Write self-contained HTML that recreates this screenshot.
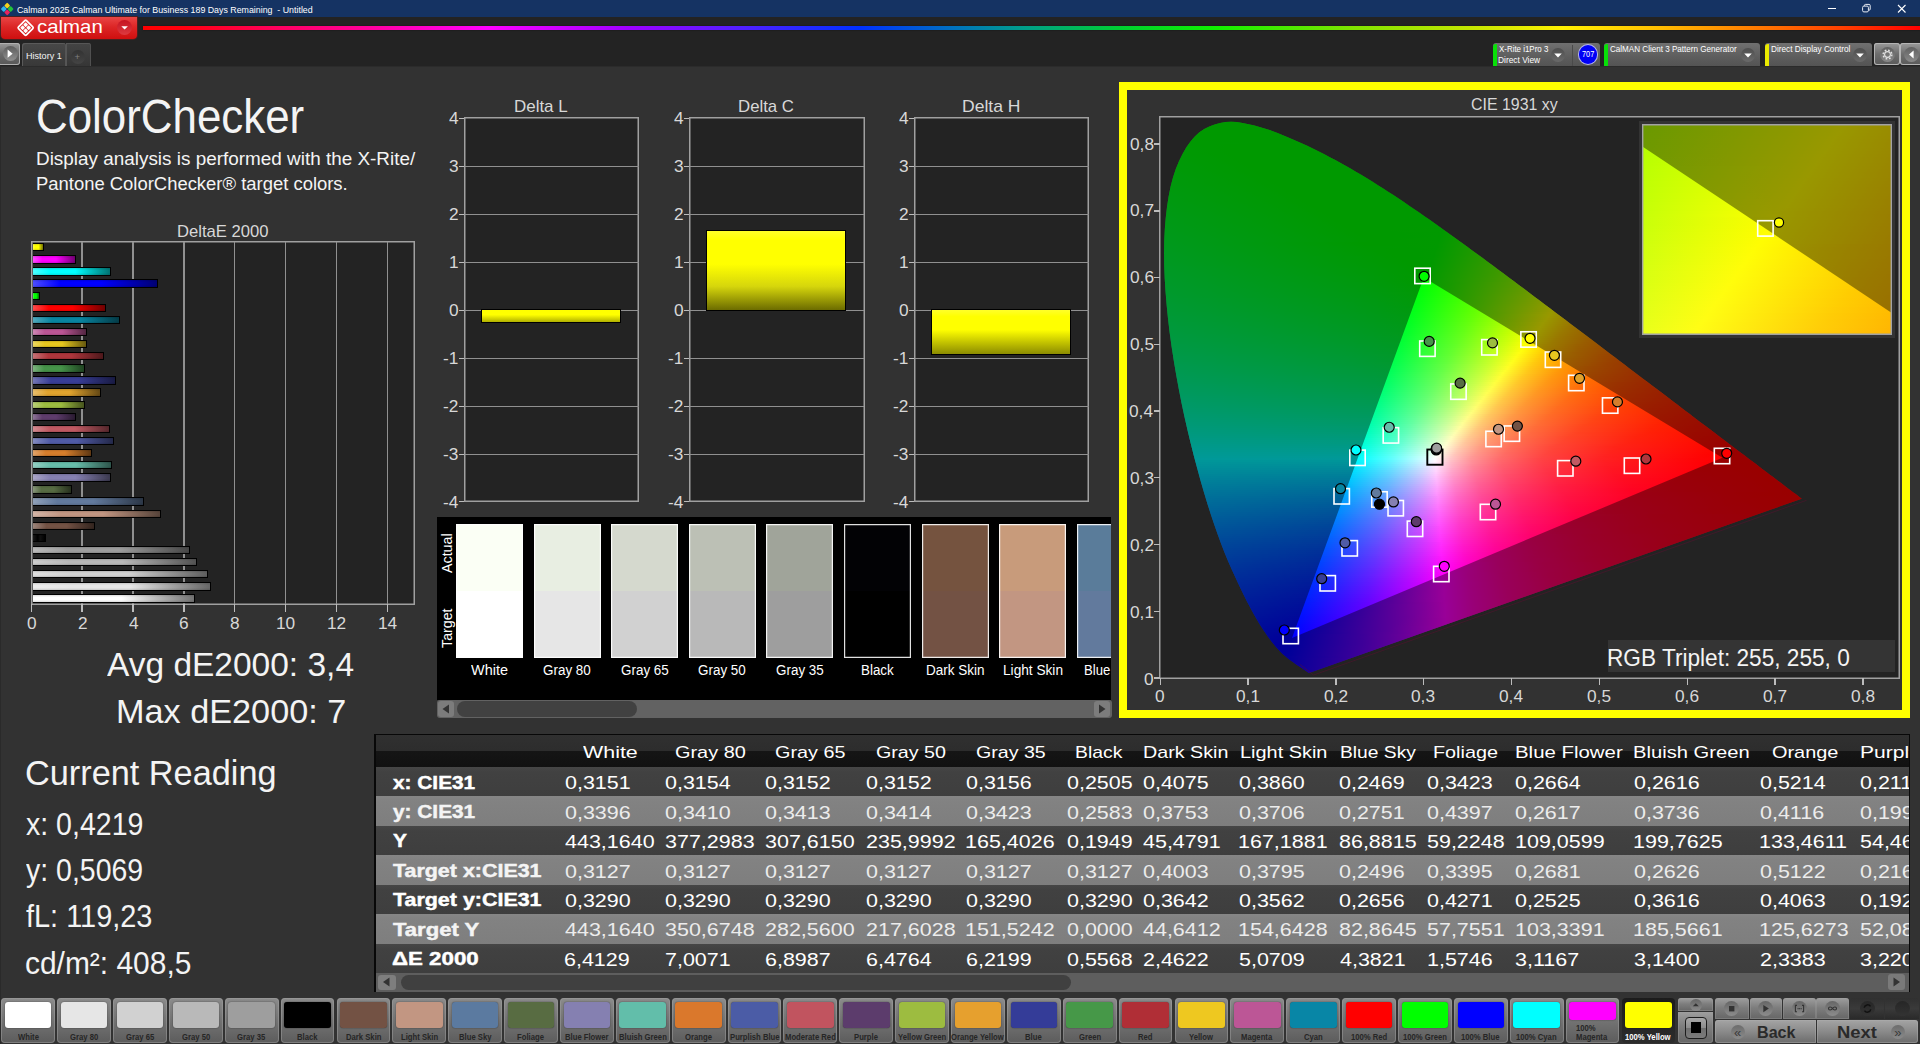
<!DOCTYPE html><html lang="en"><head><meta charset="utf-8"><title>Calman 2025 - ColorChecker</title><style>
html,body{margin:0;padding:0;background:#323232}
body{width:1920px;height:1044px;position:relative;overflow:hidden;font-family:"Liberation Sans",sans-serif}
div,.t,i{position:absolute}
i{display:block}
.t{white-space:nowrap;line-height:1;transform-origin:0 50%}
svg{overflow:visible}
</style></head><body>
<div style="left:0;top:66px;width:1.2px;height:978px;background:#2a2a2a"></div><div style="left:0;top:65.5px;width:1920px;height:1px;background:#2b2b2b"></div>
<!-- top -->
<div style="left:0px;top:0px;width:1920px;height:17px;background:#153363"></div><svg style="position:absolute;left:0;top:1px" width="15" height="15" viewBox="0 0 15 15"><g transform="translate(7.2 8) rotate(45)"><rect x="-4.6" y="-4.6" width="4.4" height="4.4" rx="1" fill="#f2d21c"/><rect x="0.2" y="-4.6" width="4.4" height="4.4" rx="1" fill="#22c33a"/><rect x="-4.6" y="0.2" width="4.4" height="4.4" rx="1" fill="#2fb4ee"/><rect x="0.2" y="0.2" width="4.4" height="4.4" rx="1" fill="#e8245e"/></g></svg><span class="t" style="left:17.16px;top:4.53px;font-size:9.59px;color:#fff;transform:scaleX(0.921);white-space:pre;">Calman 2025 Calman Ultimate for Business 189 Days Remaining  - Untitled</span><svg style="position:absolute;left:1820px;top:0" width="100" height="17" viewBox="0 0 100 17"><path d="M8 8.5h8" stroke="#fff" stroke-width="1" fill="none"/><rect x="42.6" y="6.1" width="5.8" height="5.8" rx="1.3" stroke="#e8ecf4" stroke-width="1" fill="none"/><path d="M44.4 6v-.5q0-1.1 1.1-1.1h3.6q1.1 0 1.1 1.1v3.6q0 1.1 -1.1 1.1h-.6" stroke="#e8ecf4" stroke-width="1" fill="none"/><path d="M78 5l7.5 7.5M85.5 5l-7.5 7.5" stroke="#fff" stroke-width="1.1" fill="none"/></svg><div style="left:0px;top:17px;width:1920px;height:49px;background:#232323"></div><div style="left:1px;top:17px;width:136px;height:22px;background:linear-gradient(#e94545,#dc2626 45%,#cf0f0f);border-radius:0 0 4px 4px;box-shadow:0 0 0 1px #4a2020"></div><svg style="position:absolute;left:16px;top:18px" width="20" height="20" viewBox="0 0 20 20"><g transform="translate(9.65 9.75) rotate(45)"><rect x="-5.65" y="-5.65" width="11.3" height="11.3" rx="1.2" fill="none" stroke="#fff" stroke-width="1.7"/><rect x="-3.9" y="-3.9" width="3.55" height="3.55" rx=".7" fill="#fff"/><rect x="0.35" y="-3.9" width="3.55" height="3.55" rx=".7" fill="#fff"/><rect x="-3.9" y="0.35" width="3.55" height="3.55" rx=".7" fill="#fff"/><rect x="0.35" y="0.35" width="3.55" height="3.55" rx=".7" fill="#fff"/></g></svg><span class="t" style="left:36.74px;top:17.02px;font-size:19px;color:#fff;transform:scaleX(1.074);">calman</span><div style="left:117px;top:20px;width:15px;height:15px;border-radius:50%;background:linear-gradient(#c51421,#dd3a3f)"></div><svg style="position:absolute;left:117px;top:20px" width="15" height="15" viewBox="0 0 15 15"><path d="M4.3 6.2h6.6l-3.3 3.4z" fill="#fff"/></svg><div style="left:143px;top:25.6px;width:1777px;height:4.6px;background:linear-gradient(90deg,#f00 0%,#ff0010 2.4%,#ff0060 7.7%,#ff00a0 12.9%,#f0f 19.4%,#a000ff 27.2%,#5020ff 33.8%,#0030ff 40.3%,#0070c0 45.5%,#00a088 49.7%,#00d030 55.1%,#10f000 60.3%,#80e400 68.1%,#c4e600 74.7%,#fff000 79.9%,#ffc000 85.1%,#ff8000 90.3%,#ff4000 95.6%,#f00 100%);box-shadow:0 0 1.5px rgba(0,0,0,.7)"></div><div style="left:-2px;top:43px;width:22px;height:21.5px;background:linear-gradient(#9a9a9a,#6a6a6a 50%,#585858);border-radius:3px;box-shadow:inset 0 0 0 1px #b0b0b0"></div><div style="left:2.5px;top:46px;width:15px;height:15px;border-radius:50%;background:linear-gradient(#5c5c5c,#909090)"></div><svg style="position:absolute;left:2px;top:46px" width="16" height="16" viewBox="0 0 16 16"><path d="M5.6 3.6l5 4.1-5 4.1z" fill="#fff"/></svg><div style="left:22px;top:43px;width:43.5px;height:23px;background:linear-gradient(#484848,#383838);border-radius:3px 3px 0 0;box-shadow:inset 1px 1px 0 #5a5a5a,inset -1px 0 0 #555"></div><span class="t" style="left:25.96px;top:50.96px;font-size:9.74px;color:#f4f4f4;transform:scaleX(0.931);">History 1</span><div style="left:66px;top:43px;width:25px;height:23px;background:linear-gradient(#444,#363636);border-radius:0 3px 0 0;box-shadow:inset 1px 1px 0 #565656,inset -1px 0 0 #505050"></div><div style="left:70.5px;top:49.5px;width:14px;height:14px;border-radius:50%;background:linear-gradient(#333,#444)"></div><span class="t" style="left:74.53px;top:52.36px;font-size:9.5px;color:#808080;">+</span><div style="left:1492.5px;top:43px;width:107px;height:23px;background:linear-gradient(#707070,#5d5d5d 60%,#545454);border-radius:3px 3px 0 0;"></div><div style="left:1492.7px;top:43.5px;width:4.1px;height:22.5px;background:#08e008;border-radius:3px 0 0 0"></div><span class="t" style="left:1498.83px;top:44.85px;font-size:9.16px;color:#fff;transform:scaleX(0.865);">X-Rite i1Pro 3</span><span class="t" style="left:1498.32px;top:55.85px;font-size:9.16px;color:#fff;transform:scaleX(0.912);">Direct View</span><div style="left:1551px;top:48px;width:14px;height:14px;border-radius:50%;background:linear-gradient(#4e4e4e,#6a6a6a)"></div><svg style="position:absolute;left:1551px;top:48px" width="14" height="14" viewBox="0 0 14 14"><path d="M3.2 5.6h7.6l-3.8 3.9z" fill="#fff"/></svg><div style="left:1572px;top:45px;width:1px;height:21px;background:#4a4a4a"></div><div style="left:1578.6px;top:45.2px;width:18.6px;height:18.6px;border-radius:50%;background:#0000f6;box-shadow:0 0 0 1px #b4b4ec"></div><span class="t" style="left:1581.78px;top:50.91px;font-size:8.14px;color:#fff;transform:scaleX(0.902);">707</span><div style="left:1603.7px;top:43px;width:156.3px;height:23px;background:linear-gradient(#707070,#5d5d5d 60%,#545454);border-radius:3px 3px 0 0;"></div><div style="left:1603.9px;top:43.5px;width:4.1px;height:22.5px;background:#08e008;border-radius:3px 0 0 0"></div><span class="t" style="left:1609.9px;top:44.85px;font-size:9.16px;color:#fff;transform:scaleX(0.882);">CalMAN Client 3 Pattern Generator</span><div style="left:1740.6px;top:48px;width:14px;height:14px;border-radius:50%;background:linear-gradient(#4e4e4e,#6a6a6a)"></div><svg style="position:absolute;left:1740.6px;top:48px" width="14" height="14" viewBox="0 0 14 14"><path d="M3.2 5.6h7.6l-3.8 3.9z" fill="#fff"/></svg><div style="left:1764.6px;top:43px;width:107.2px;height:23px;background:linear-gradient(#707070,#5d5d5d 60%,#545454);border-radius:3px 3px 0 0;"></div><div style="left:1764.8px;top:43.5px;width:4.1px;height:22.5px;background:#eaea00;border-radius:3px 0 0 0"></div><span class="t" style="left:1770.53px;top:44.85px;font-size:9.16px;color:#fff;transform:scaleX(0.897);">Direct Display Control</span><div style="left:1852.7px;top:48px;width:14px;height:14px;border-radius:50%;background:linear-gradient(#4e4e4e,#6a6a6a)"></div><svg style="position:absolute;left:1852.7px;top:48px" width="14" height="14" viewBox="0 0 14 14"><path d="M3.2 5.6h7.6l-3.8 3.9z" fill="#fff"/></svg><div style="left:1874px;top:43px;width:25.5px;height:21.5px;background:linear-gradient(#9a9a9a,#6e6e6e 50%,#5a5a5a);border-radius:3px;box-shadow:inset 0 0 0 1px #b4b4b4"></div><div style="left:1879.5px;top:46.5px;width:15px;height:15px;border-radius:50%;background:linear-gradient(#606060,#8a8a8a)"></div><svg style="position:absolute;left:1879.5px;top:46.5px" width="15" height="15" viewBox="0 0 15 15"><circle cx="7.5" cy="7.5" r="2.9" fill="none" stroke="#e4e4e4" stroke-width="1.1"/><circle cx="7.5" cy="7.5" r="4.4" fill="none" stroke="#e4e4e4" stroke-width="1.4" stroke-dasharray="1.73 1.73"/></svg><div style="left:1899.5px;top:43px;width:24px;height:21.5px;background:linear-gradient(#9a9a9a,#6e6e6e 50%,#5a5a5a);border-radius:3px;box-shadow:inset 0 0 0 1px #b4b4b4"></div><div style="left:1904px;top:46.5px;width:15px;height:15px;border-radius:50%;background:linear-gradient(#606060,#8a8a8a)"></div><svg style="position:absolute;left:1904px;top:46.5px" width="15" height="15" viewBox="0 0 15 15"><path d="M9.6 3.6l-4.6 3.9 4.6 3.9z" fill="#fff"/></svg>
<!-- left -->
<span class="t" style="left:36.21px;top:92.08px;font-size:48.69px;color:#f4f4f4;transform:scaleX(0.901);">ColorChecker</span><span class="t" style="left:36.25px;top:150.13px;font-size:18.75px;color:#f4f4f4;transform:scaleX(1.008);">Display analysis is performed with the X-Rite/</span><span class="t" style="left:36.29px;top:175.13px;font-size:18.75px;color:#f4f4f4;transform:scaleX(0.983);">Pantone ColorChecker® target colors.</span><span class="t" style="left:177.04px;top:223.57px;font-size:16.57px;color:#d8d8d8;transform:scaleX(1.004);">DeltaE 2000</span><div style="left:30.95px;top:241.25px;width:383.6px;height:363.5px;background:#232323;box-shadow:inset 0 0 0 1.5px #a0a0a0"></div><div style="left:81.21px;top:242px;width:1.4px;height:362px;background:#909090"></div><div style="left:81.21px;top:604px;width:1.4px;height:8px;background:#bcbcbc"></div><div style="left:132.17px;top:242px;width:1.4px;height:362px;background:#909090"></div><div style="left:132.17px;top:604px;width:1.4px;height:8px;background:#bcbcbc"></div><div style="left:183.13px;top:242px;width:1.4px;height:362px;background:#909090"></div><div style="left:183.13px;top:604px;width:1.4px;height:8px;background:#bcbcbc"></div><div style="left:234.09px;top:242px;width:1.4px;height:362px;background:#909090"></div><div style="left:234.09px;top:604px;width:1.4px;height:8px;background:#bcbcbc"></div><div style="left:285.05px;top:242px;width:1.4px;height:362px;background:#909090"></div><div style="left:285.05px;top:604px;width:1.4px;height:8px;background:#bcbcbc"></div><div style="left:336.01px;top:242px;width:1.4px;height:362px;background:#909090"></div><div style="left:336.01px;top:604px;width:1.4px;height:8px;background:#bcbcbc"></div><div style="left:386.97px;top:242px;width:1.4px;height:362px;background:#909090"></div><div style="left:386.97px;top:604px;width:1.4px;height:8px;background:#bcbcbc"></div><div style="left:31px;top:604px;width:1.4px;height:8px;background:#bcbcbc"></div><span class="t" style="left:26.64px;top:615.77px;font-size:15.99px;color:#d8d8d8;transform:scaleX(1.080);">0</span><span class="t" style="left:77.61px;top:615.77px;font-size:15.99px;color:#d8d8d8;transform:scaleX(1.080);">2</span><span class="t" style="left:128.63px;top:615.77px;font-size:15.99px;color:#d8d8d8;transform:scaleX(1.080);">4</span><span class="t" style="left:179.47px;top:615.77px;font-size:15.99px;color:#d8d8d8;transform:scaleX(1.080);">6</span><span class="t" style="left:230.49px;top:615.77px;font-size:15.99px;color:#d8d8d8;transform:scaleX(1.080);">8</span><span class="t" style="left:276.32px;top:615.77px;font-size:15.99px;color:#d8d8d8;transform:scaleX(1.080);">10</span><span class="t" style="left:327.38px;top:615.77px;font-size:15.99px;color:#d8d8d8;transform:scaleX(1.080);">12</span><span class="t" style="left:378.16px;top:615.77px;font-size:15.99px;color:#d8d8d8;transform:scaleX(1.080);">14</span><div style="left:32.6px;top:243.15px;width:11.5px;height:8.3px;background:linear-gradient(rgba(0,0,0,.14),rgba(0,0,0,0) 30%,rgba(0,0,0,0) 70%,rgba(0,0,0,.14)),linear-gradient(90deg,#ffff4c,#ffff00 22%,#ffff00 55%,#737300);border:1.4px solid #000;border-left:0;box-sizing:border-box"></div><div style="left:32.6px;top:255.26px;width:43.35px;height:8.3px;background:linear-gradient(rgba(0,0,0,.14),rgba(0,0,0,0) 30%,rgba(0,0,0,0) 70%,rgba(0,0,0,.14)),linear-gradient(90deg,#ff4cff,#ff00ff 22%,#ff00ff 55%,#730073);border:1.4px solid #000;border-left:0;box-sizing:border-box"></div><div style="left:32.6px;top:267.37px;width:78.9px;height:8.3px;background:linear-gradient(rgba(0,0,0,.14),rgba(0,0,0,0) 30%,rgba(0,0,0,0) 70%,rgba(0,0,0,.14)),linear-gradient(90deg,#4cffff,#00ffff 22%,#00ffff 55%,#007373);border:1.4px solid #000;border-left:0;box-sizing:border-box"></div><div style="left:32.6px;top:279.48px;width:125.78px;height:8.3px;background:linear-gradient(rgba(0,0,0,.14),rgba(0,0,0,0) 30%,rgba(0,0,0,0) 70%,rgba(0,0,0,.14)),linear-gradient(90deg,#4c4cff,#0000ff 22%,#0000ff 55%,#000073);border:1.4px solid #000;border-left:0;box-sizing:border-box"></div><div style="left:32.6px;top:291.59px;width:7.55px;height:8.3px;background:linear-gradient(rgba(0,0,0,.14),rgba(0,0,0,0) 30%,rgba(0,0,0,0) 70%,rgba(0,0,0,.14)),linear-gradient(90deg,#4cff4c,#00ff00 22%,#00ff00 55%,#007300);border:1.4px solid #000;border-left:0;box-sizing:border-box"></div><div style="left:32.6px;top:303.7px;width:73.04px;height:8.3px;background:linear-gradient(rgba(0,0,0,.14),rgba(0,0,0,0) 30%,rgba(0,0,0,0) 70%,rgba(0,0,0,.14)),linear-gradient(90deg,#ff4c4c,#ff0000 22%,#ff0000 55%,#730000);border:1.4px solid #000;border-left:0;box-sizing:border-box"></div><div style="left:32.6px;top:315.81px;width:87.05px;height:8.3px;background:linear-gradient(rgba(0,0,0,.14),rgba(0,0,0,0) 30%,rgba(0,0,0,0) 70%,rgba(0,0,0,.14)),linear-gradient(90deg,#52aabd,#0885a1 22%,#0885a1 55%,#043c48);border:1.4px solid #000;border-left:0;box-sizing:border-box"></div><div style="left:32.6px;top:327.92px;width:53.93px;height:8.3px;background:linear-gradient(rgba(0,0,0,.14),rgba(0,0,0,0) 30%,rgba(0,0,0,0) 70%,rgba(0,0,0,.14)),linear-gradient(90deg,#cf89b5,#bb5695 22%,#bb5695 55%,#542743);border:1.4px solid #000;border-left:0;box-sizing:border-box"></div><div style="left:32.6px;top:340.03px;width:53.93px;height:8.3px;background:linear-gradient(rgba(0,0,0,.14),rgba(0,0,0,0) 30%,rgba(0,0,0,0) 70%,rgba(0,0,0,.14)),linear-gradient(90deg,#eed862,#e7c71f 22%,#e7c71f 55%,#685a0e);border:1.4px solid #000;border-left:0;box-sizing:border-box"></div><div style="left:32.6px;top:352.14px;width:71.51px;height:8.3px;background:linear-gradient(rgba(0,0,0,.14),rgba(0,0,0,0) 30%,rgba(0,0,0,0) 70%,rgba(0,0,0,.14)),linear-gradient(90deg,#c77276,#af363c 22%,#af363c 55%,#4f181b);border:1.4px solid #000;border-left:0;box-sizing:border-box"></div><div style="left:32.6px;top:364.25px;width:52.4px;height:8.3px;background:linear-gradient(rgba(0,0,0,.14),rgba(0,0,0,0) 30%,rgba(0,0,0,0) 70%,rgba(0,0,0,.14)),linear-gradient(90deg,#7eb480,#469449 22%,#469449 55%,#1f4321);border:1.4px solid #000;border-left:0;box-sizing:border-box"></div><div style="left:32.6px;top:376.36px;width:83.48px;height:8.3px;background:linear-gradient(rgba(0,0,0,.14),rgba(0,0,0,0) 30%,rgba(0,0,0,0) 70%,rgba(0,0,0,.14)),linear-gradient(90deg,#7477b6,#383d96 22%,#383d96 55%,#191b44);border:1.4px solid #000;border-left:0;box-sizing:border-box"></div><div style="left:32.6px;top:388.47px;width:67.94px;height:8.3px;background:linear-gradient(rgba(0,0,0,.14),rgba(0,0,0,0) 30%,rgba(0,0,0,0) 70%,rgba(0,0,0,.14)),linear-gradient(90deg,#e9bf6d,#e0a32e 22%,#e0a32e 55%,#654915);border:1.4px solid #000;border-left:0;box-sizing:border-box"></div><div style="left:32.6px;top:400.58px;width:52.4px;height:8.3px;background:linear-gradient(rgba(0,0,0,.14),rgba(0,0,0,0) 30%,rgba(0,0,0,0) 70%,rgba(0,0,0,.14)),linear-gradient(90deg,#bad079,#9dbc40 22%,#9dbc40 55%,#47551d);border:1.4px solid #000;border-left:0;box-sizing:border-box"></div><div style="left:32.6px;top:412.69px;width:43.23px;height:8.3px;background:linear-gradient(rgba(0,0,0,.14),rgba(0,0,0,0) 30%,rgba(0,0,0,0) 70%,rgba(0,0,0,.14)),linear-gradient(90deg,#8e7698,#5e3c6c 22%,#5e3c6c 55%,#2a1b31);border:1.4px solid #000;border-left:0;box-sizing:border-box"></div><div style="left:32.6px;top:424.81px;width:77.37px;height:8.3px;background:linear-gradient(rgba(0,0,0,.14),rgba(0,0,0,0) 30%,rgba(0,0,0,0) 70%,rgba(0,0,0,.14)),linear-gradient(90deg,#d48c92,#c15a63 22%,#c15a63 55%,#57282d);border:1.4px solid #000;border-left:0;box-sizing:border-box"></div><div style="left:32.6px;top:436.92px;width:81.45px;height:8.3px;background:linear-gradient(rgba(0,0,0,.14),rgba(0,0,0,0) 30%,rgba(0,0,0,0) 70%,rgba(0,0,0,.14)),linear-gradient(90deg,#848cc1,#505ba6 22%,#505ba6 55%,#24294b);border:1.4px solid #000;border-left:0;box-sizing:border-box"></div><div style="left:32.6px;top:449.03px;width:58.98px;height:8.3px;background:linear-gradient(rgba(0,0,0,.14),rgba(0,0,0,0) 30%,rgba(0,0,0,0) 70%,rgba(0,0,0,.14)),linear-gradient(90deg,#e2a56b,#d67e2c 22%,#d67e2c 55%,#603914);border:1.4px solid #000;border-left:0;box-sizing:border-box"></div><div style="left:32.6px;top:461.14px;width:79.41px;height:8.3px;background:linear-gradient(rgba(0,0,0,.14),rgba(0,0,0,0) 30%,rgba(0,0,0,0) 70%,rgba(0,0,0,.14)),linear-gradient(90deg,#95d1c4,#67bdaa 22%,#67bdaa 55%,#2e554c);border:1.4px solid #000;border-left:0;box-sizing:border-box"></div><div style="left:32.6px;top:473.25px;width:78.81px;height:8.3px;background:linear-gradient(rgba(0,0,0,.14),rgba(0,0,0,0) 30%,rgba(0,0,0,0) 70%,rgba(0,0,0,.14)),linear-gradient(90deg,#aaa6c8,#8580b1 22%,#8580b1 55%,#3c3a50);border:1.4px solid #000;border-left:0;box-sizing:border-box"></div><div style="left:32.6px;top:485.36px;width:39.52px;height:8.3px;background:linear-gradient(rgba(0,0,0,.14),rgba(0,0,0,0) 30%,rgba(0,0,0,0) 70%,rgba(0,0,0,.14)),linear-gradient(90deg,#89987b,#576c43 22%,#576c43 55%,#27311e);border:1.4px solid #000;border-left:0;box-sizing:border-box"></div><div style="left:32.6px;top:497.47px;width:111.06px;height:8.3px;background:linear-gradient(rgba(0,0,0,.14),rgba(0,0,0,0) 30%,rgba(0,0,0,0) 70%,rgba(0,0,0,.14)),linear-gradient(90deg,#91a2ba,#627a9d 22%,#627a9d 55%,#2c3747);border:1.4px solid #000;border-left:0;box-sizing:border-box"></div><div style="left:32.6px;top:509.58px;width:128.61px;height:8.3px;background:linear-gradient(rgba(0,0,0,.14),rgba(0,0,0,0) 30%,rgba(0,0,0,0) 70%,rgba(0,0,0,.14)),linear-gradient(90deg,#d4b6a8,#c29682 22%,#c29682 55%,#57443a);border:1.4px solid #000;border-left:0;box-sizing:border-box"></div><div style="left:32.6px;top:521.69px;width:62.14px;height:8.3px;background:linear-gradient(rgba(0,0,0,.14),rgba(0,0,0,0) 30%,rgba(0,0,0,0) 70%,rgba(0,0,0,.14)),linear-gradient(90deg,#9d867c,#735244 22%,#735244 55%,#34251f);border:1.4px solid #000;border-left:0;box-sizing:border-box"></div><div style="left:32.6px;top:533.8px;width:13.59px;height:8.3px;background:linear-gradient(rgba(0,0,0,.14),rgba(0,0,0,0) 30%,rgba(0,0,0,0) 70%,rgba(0,0,0,.14)),linear-gradient(90deg,#1a1a1a,#000 40%,#111 60%,#000);border:1.4px solid #000;border-left:0;box-sizing:border-box"></div><div style="left:32.6px;top:545.91px;width:157.88px;height:8.3px;background:linear-gradient(rgba(0,0,0,.14),rgba(0,0,0,0) 30%,rgba(0,0,0,0) 70%,rgba(0,0,0,.14)),linear-gradient(90deg,#bbbbbb,#9e9e9e 22%,#9e9e9e 55%,#474747);border:1.4px solid #000;border-left:0;box-sizing:border-box"></div><div style="left:32.6px;top:558.02px;width:164.42px;height:8.3px;background:linear-gradient(rgba(0,0,0,.14),rgba(0,0,0,0) 30%,rgba(0,0,0,0) 70%,rgba(0,0,0,.14)),linear-gradient(90deg,#cecece,#b9b9b9 22%,#b9b9b9 55%,#535353);border:1.4px solid #000;border-left:0;box-sizing:border-box"></div><div style="left:32.6px;top:570.13px;width:175.18px;height:8.3px;background:linear-gradient(rgba(0,0,0,.14),rgba(0,0,0,0) 30%,rgba(0,0,0,0) 70%,rgba(0,0,0,.14)),linear-gradient(90deg,#dfdfdf,#d1d1d1 22%,#d1d1d1 55%,#5e5e5e);border:1.4px solid #000;border-left:0;box-sizing:border-box"></div><div style="left:32.6px;top:582.24px;width:177.94px;height:8.3px;background:linear-gradient(rgba(0,0,0,.14),rgba(0,0,0,0) 30%,rgba(0,0,0,0) 70%,rgba(0,0,0,.14)),linear-gradient(90deg,#eeeeee,#e6e6e6 22%,#e6e6e6 55%,#676767);border:1.4px solid #000;border-left:0;box-sizing:border-box"></div><div style="left:32.6px;top:594.35px;width:162.8px;height:8.3px;background:linear-gradient(rgba(0,0,0,.14),rgba(0,0,0,0) 30%,rgba(0,0,0,0) 70%,rgba(0,0,0,.14)),linear-gradient(90deg,#ffffff,#ffffff 22%,#ffffff 55%,#737373);border:1.4px solid #000;border-left:0;box-sizing:border-box"></div><span class="t" style="left:107.23px;top:647.63px;font-size:33.87px;color:#f4f4f4;transform:scaleX(0.989);">Avg dE2000: 3,4</span><span class="t" style="left:115.79px;top:694.63px;font-size:33.87px;color:#f4f4f4;transform:scaleX(1.011);">Max dE2000: 7</span><span class="t" style="left:25.19px;top:755.93px;font-size:35.76px;color:#f4f4f4;transform:scaleX(0.959);">Current Reading</span><span class="t" style="left:25.69px;top:808.66px;font-size:30.52px;color:#f4f4f4;transform:scaleX(0.935);">x: 0,4219</span><span class="t" style="left:25.94px;top:855.36px;font-size:30.52px;color:#f4f4f4;transform:scaleX(0.933);">y: 0,5069</span><span class="t" style="left:25.6px;top:901.46px;font-size:30.52px;color:#f4f4f4;transform:scaleX(0.947);">fL: 119,23</span><span class="t" style="left:24.74px;top:948.16px;font-size:30.52px;color:#f4f4f4;transform:scaleX(0.981);">cd/m²: 408,5</span>
<!-- delta -->
<span class="t" style="left:514.01px;top:99.17px;font-size:16.57px;color:#d8d8d8;transform:scaleX(1.022);">Delta L</span><div style="left:464.15px;top:117.4px;width:175.2px;height:384.8px;background:#232323;box-shadow:inset 0 0 0 1.5px #a0a0a0"></div><div style="left:458.6px;top:117.55px;width:5.6px;height:1.3px;background:#bcbcbc"></div><span class="t" style="left:448.8px;top:111.27px;font-size:15.99px;color:#d8d8d8;transform:scaleX(1.080);">4</span><div style="left:464.9px;top:165.55px;width:173.7px;height:1.3px;background:#909090"></div><div style="left:458.6px;top:165.55px;width:5.6px;height:1.3px;background:#bcbcbc"></div><span class="t" style="left:449.04px;top:159.27px;font-size:15.99px;color:#d8d8d8;transform:scaleX(1.080);">3</span><div style="left:464.9px;top:213.55px;width:173.7px;height:1.3px;background:#909090"></div><div style="left:458.6px;top:213.55px;width:5.6px;height:1.3px;background:#bcbcbc"></div><span class="t" style="left:449.16px;top:207.27px;font-size:15.99px;color:#d8d8d8;transform:scaleX(1.080);">2</span><div style="left:464.9px;top:261.55px;width:173.7px;height:1.3px;background:#909090"></div><div style="left:458.6px;top:261.55px;width:5.6px;height:1.3px;background:#bcbcbc"></div><span class="t" style="left:449.13px;top:255.27px;font-size:15.99px;color:#d8d8d8;transform:scaleX(1.080);">1</span><div style="left:464.9px;top:309.55px;width:173.7px;height:1.3px;background:#909090"></div><div style="left:458.6px;top:309.55px;width:5.6px;height:1.3px;background:#bcbcbc"></div><span class="t" style="left:448.96px;top:303.27px;font-size:15.99px;color:#d8d8d8;transform:scaleX(1.080);">0</span><div style="left:464.9px;top:357.55px;width:173.7px;height:1.3px;background:#909090"></div><div style="left:458.6px;top:357.55px;width:5.6px;height:1.3px;background:#bcbcbc"></div><span class="t" style="left:443.38px;top:351.27px;font-size:15.99px;color:#d8d8d8;transform:scaleX(1.080);">-1</span><div style="left:464.9px;top:405.55px;width:173.7px;height:1.3px;background:#909090"></div><div style="left:458.6px;top:405.55px;width:5.6px;height:1.3px;background:#bcbcbc"></div><span class="t" style="left:443.41px;top:399.27px;font-size:15.99px;color:#d8d8d8;transform:scaleX(1.080);">-2</span><div style="left:464.9px;top:453.55px;width:173.7px;height:1.3px;background:#909090"></div><div style="left:458.6px;top:453.55px;width:5.6px;height:1.3px;background:#bcbcbc"></div><span class="t" style="left:443.29px;top:447.27px;font-size:15.99px;color:#d8d8d8;transform:scaleX(1.080);">-3</span><div style="left:458.6px;top:500.95px;width:5.6px;height:1.3px;background:#bcbcbc"></div><span class="t" style="left:443.05px;top:495.07px;font-size:15.99px;color:#d8d8d8;transform:scaleX(1.080);">-4</span><div style="left:481.1px;top:309.25px;width:139.6px;height:14.08px;background:linear-gradient(#ff0 0%,#ff0 40%,#b0b000 100%);border:1.5px solid #000;box-sizing:border-box"></div><span class="t" style="left:737.97px;top:99.17px;font-size:16.57px;color:#d8d8d8;transform:scaleX(1.014);">Delta C</span><div style="left:689.15px;top:117.4px;width:175.4px;height:384.8px;background:#232323;box-shadow:inset 0 0 0 1.5px #a0a0a0"></div><div style="left:683.6px;top:117.55px;width:5.6px;height:1.3px;background:#bcbcbc"></div><span class="t" style="left:673.8px;top:111.27px;font-size:15.99px;color:#d8d8d8;transform:scaleX(1.080);">4</span><div style="left:689.9px;top:165.55px;width:173.9px;height:1.3px;background:#909090"></div><div style="left:683.6px;top:165.55px;width:5.6px;height:1.3px;background:#bcbcbc"></div><span class="t" style="left:674.04px;top:159.27px;font-size:15.99px;color:#d8d8d8;transform:scaleX(1.080);">3</span><div style="left:689.9px;top:213.55px;width:173.9px;height:1.3px;background:#909090"></div><div style="left:683.6px;top:213.55px;width:5.6px;height:1.3px;background:#bcbcbc"></div><span class="t" style="left:674.16px;top:207.27px;font-size:15.99px;color:#d8d8d8;transform:scaleX(1.080);">2</span><div style="left:689.9px;top:261.55px;width:173.9px;height:1.3px;background:#909090"></div><div style="left:683.6px;top:261.55px;width:5.6px;height:1.3px;background:#bcbcbc"></div><span class="t" style="left:674.13px;top:255.27px;font-size:15.99px;color:#d8d8d8;transform:scaleX(1.080);">1</span><div style="left:689.9px;top:309.55px;width:173.9px;height:1.3px;background:#909090"></div><div style="left:683.6px;top:309.55px;width:5.6px;height:1.3px;background:#bcbcbc"></div><span class="t" style="left:673.96px;top:303.27px;font-size:15.99px;color:#d8d8d8;transform:scaleX(1.080);">0</span><div style="left:689.9px;top:357.55px;width:173.9px;height:1.3px;background:#909090"></div><div style="left:683.6px;top:357.55px;width:5.6px;height:1.3px;background:#bcbcbc"></div><span class="t" style="left:668.38px;top:351.27px;font-size:15.99px;color:#d8d8d8;transform:scaleX(1.080);">-1</span><div style="left:689.9px;top:405.55px;width:173.9px;height:1.3px;background:#909090"></div><div style="left:683.6px;top:405.55px;width:5.6px;height:1.3px;background:#bcbcbc"></div><span class="t" style="left:668.41px;top:399.27px;font-size:15.99px;color:#d8d8d8;transform:scaleX(1.080);">-2</span><div style="left:689.9px;top:453.55px;width:173.9px;height:1.3px;background:#909090"></div><div style="left:683.6px;top:453.55px;width:5.6px;height:1.3px;background:#bcbcbc"></div><span class="t" style="left:668.29px;top:447.27px;font-size:15.99px;color:#d8d8d8;transform:scaleX(1.080);">-3</span><div style="left:683.6px;top:500.95px;width:5.6px;height:1.3px;background:#bcbcbc"></div><span class="t" style="left:668.05px;top:495.07px;font-size:15.99px;color:#d8d8d8;transform:scaleX(1.080);">-4</span><div style="left:706.1px;top:229.81px;width:139.6px;height:81.04px;background:linear-gradient(#ffff2a 0%,#ff0 12%,#ff0 42%,#d6d60c 70%,#6c6c00 100%);border:1.5px solid #000;box-sizing:border-box"></div><span class="t" style="left:962.01px;top:99.17px;font-size:16.57px;color:#d8d8d8;transform:scaleX(1.060);">Delta H</span><div style="left:914.15px;top:117.4px;width:175.3px;height:384.8px;background:#232323;box-shadow:inset 0 0 0 1.5px #a0a0a0"></div><div style="left:908.6px;top:117.55px;width:5.6px;height:1.3px;background:#bcbcbc"></div><span class="t" style="left:898.8px;top:111.27px;font-size:15.99px;color:#d8d8d8;transform:scaleX(1.080);">4</span><div style="left:914.9px;top:165.55px;width:173.8px;height:1.3px;background:#909090"></div><div style="left:908.6px;top:165.55px;width:5.6px;height:1.3px;background:#bcbcbc"></div><span class="t" style="left:899.04px;top:159.27px;font-size:15.99px;color:#d8d8d8;transform:scaleX(1.080);">3</span><div style="left:914.9px;top:213.55px;width:173.8px;height:1.3px;background:#909090"></div><div style="left:908.6px;top:213.55px;width:5.6px;height:1.3px;background:#bcbcbc"></div><span class="t" style="left:899.16px;top:207.27px;font-size:15.99px;color:#d8d8d8;transform:scaleX(1.080);">2</span><div style="left:914.9px;top:261.55px;width:173.8px;height:1.3px;background:#909090"></div><div style="left:908.6px;top:261.55px;width:5.6px;height:1.3px;background:#bcbcbc"></div><span class="t" style="left:899.13px;top:255.27px;font-size:15.99px;color:#d8d8d8;transform:scaleX(1.080);">1</span><div style="left:914.9px;top:309.55px;width:173.8px;height:1.3px;background:#909090"></div><div style="left:908.6px;top:309.55px;width:5.6px;height:1.3px;background:#bcbcbc"></div><span class="t" style="left:898.96px;top:303.27px;font-size:15.99px;color:#d8d8d8;transform:scaleX(1.080);">0</span><div style="left:914.9px;top:357.55px;width:173.8px;height:1.3px;background:#909090"></div><div style="left:908.6px;top:357.55px;width:5.6px;height:1.3px;background:#bcbcbc"></div><span class="t" style="left:893.38px;top:351.27px;font-size:15.99px;color:#d8d8d8;transform:scaleX(1.080);">-1</span><div style="left:914.9px;top:405.55px;width:173.8px;height:1.3px;background:#909090"></div><div style="left:908.6px;top:405.55px;width:5.6px;height:1.3px;background:#bcbcbc"></div><span class="t" style="left:893.41px;top:399.27px;font-size:15.99px;color:#d8d8d8;transform:scaleX(1.080);">-2</span><div style="left:914.9px;top:453.55px;width:173.8px;height:1.3px;background:#909090"></div><div style="left:908.6px;top:453.55px;width:5.6px;height:1.3px;background:#bcbcbc"></div><span class="t" style="left:893.29px;top:447.27px;font-size:15.99px;color:#d8d8d8;transform:scaleX(1.080);">-3</span><div style="left:908.6px;top:500.95px;width:5.6px;height:1.3px;background:#bcbcbc"></div><span class="t" style="left:893.05px;top:495.07px;font-size:15.99px;color:#d8d8d8;transform:scaleX(1.080);">-4</span><div style="left:931.1px;top:309.25px;width:139.6px;height:45.28px;background:linear-gradient(#ffff2a 0%,#ff0 15%,#ff0 45%,#8c8c00 100%);border:1.5px solid #000;box-sizing:border-box"></div>
<!-- swatches -->
<div style="left:436.8px;top:516.8px;width:674.2px;height:183.2px;background:#000;overflow:hidden"><span class="t" style="left:-9.5px;top:29.01px;font-size:14.39px;color:#fff;width:39.99px;text-align:center;transform-origin:50% 50%;transform:rotate(-90deg) scaleX(0.988)">Actual</span><span class="t" style="left:-9.5px;top:103.91px;font-size:14.39px;color:#fff;width:39.99px;text-align:center;transform-origin:50% 50%;transform:rotate(-90deg) scaleX(0.988)">Target</span><div style="left:19.2px;top:7px;width:67px;height:134px;background:linear-gradient(#fbfff5 50%,#ffffff 50%);box-shadow:inset 0 0 0 1.2px rgba(255,255,255,.88)"></div><span class="t" style="left:34.51px;top:145.72px;font-size:14.39px;color:#fff;transform:scaleX(1.005);">White</span><div style="left:96.82px;top:7px;width:67px;height:134px;background:linear-gradient(#e8eee2 50%,#e6e6e6 50%);box-shadow:inset 0 0 0 1.2px rgba(255,255,255,.88)"></div><span class="t" style="left:106.35px;top:145.72px;font-size:14.39px;color:#fff;transform:scaleX(0.934);">Gray 80</span><div style="left:174.44px;top:7px;width:67px;height:134px;background:linear-gradient(#d5d9ce 50%,#d1d1d1 50%);box-shadow:inset 0 0 0 1.2px rgba(255,255,255,.88)"></div><span class="t" style="left:183.97px;top:145.72px;font-size:14.39px;color:#fff;transform:scaleX(0.934);">Gray 65</span><div style="left:252.06px;top:7px;width:67px;height:134px;background:linear-gradient(#bcc0b5 50%,#b9b9b9 50%);box-shadow:inset 0 0 0 1.2px rgba(255,255,255,.88)"></div><span class="t" style="left:261.59px;top:145.72px;font-size:14.39px;color:#fff;transform:scaleX(0.934);">Gray 50</span><div style="left:329.68px;top:7px;width:67px;height:134px;background:linear-gradient(#a0a49a 50%,#9e9e9e 50%);box-shadow:inset 0 0 0 1.2px rgba(255,255,255,.88)"></div><span class="t" style="left:339.21px;top:145.72px;font-size:14.39px;color:#fff;transform:scaleX(0.934);">Gray 35</span><div style="left:407.3px;top:7px;width:67px;height:134px;background:linear-gradient(#020205 50%,#000000 50%);box-shadow:inset 0 0 0 1.2px rgba(255,255,255,.88)"></div><span class="t" style="left:423.86px;top:145.72px;font-size:14.39px;color:#fff;transform:scaleX(0.931);">Black</span><div style="left:484.92px;top:7px;width:67px;height:134px;background:linear-gradient(#75533f 50%,#735244 50%);box-shadow:inset 0 0 0 1.2px rgba(255,255,255,.88)"></div><span class="t" style="left:489.04px;top:145.72px;font-size:14.39px;color:#fff;transform:scaleX(0.938);">Dark Skin</span><div style="left:562.54px;top:7px;width:67px;height:134px;background:linear-gradient(#c89b7b 50%,#c29682 50%);box-shadow:inset 0 0 0 1.2px rgba(255,255,255,.88)"></div><span class="t" style="left:565.91px;top:145.72px;font-size:14.39px;color:#fff;transform:scaleX(0.950);">Light Skin</span><div style="left:640.16px;top:7px;width:67px;height:134px;background:linear-gradient(#5a7c9a 50%,#627a9d 50%);box-shadow:inset 0 0 0 1.2px rgba(255,255,255,.88)"></div><span class="t" style="left:647.23px;top:145.72px;font-size:14.39px;color:#fff;transform:scaleX(0.912);">Blue Sky</span></div><div style="left:437px;top:699.5px;width:674.5px;height:18.5px;background:#626262;border-radius:3px"></div><div style="left:456.5px;top:701px;width:180.5px;height:15.5px;background:#414141;border-radius:8px"></div><div style="left:438px;top:701px;width:16px;height:15.5px;background:#7c7c7c;border-radius:3px"></div><svg style="position:absolute;left:438px;top:701px" width="16" height="16" viewBox="0 0 16 16"><path d="M11 3.5v9l-6.5-4.5z" fill="#333"/></svg><div style="left:1093.5px;top:701px;width:16px;height:15.5px;background:#7c7c7c;border-radius:3px"></div><svg style="position:absolute;left:1093.5px;top:701px" width="16" height="16" viewBox="0 0 16 16"><path d="M5 3.5v9l6.5-4.5z" fill="#333"/></svg>
<!-- cie -->
<div style="left:1119.2px;top:82px;width:791.1px;height:636.1px;border:8px solid #ff0;box-sizing:border-box"></div><span class="t" style="left:1470.9px;top:96.48px;font-size:17.15px;color:#d8d8d8;transform:scaleX(0.929);">CIE 1931 xy</span><div style="left:1159.45px;top:115.75px;width:740.3px;height:563px;background:#232323;box-shadow:inset 0 0 0 1.5px #a0a0a0"></div><div style="left:1159.5px;top:678px;width:1.4px;height:6.5px;background:#bcbcbc"></div><span class="t" style="left:1154.99px;top:689.17px;font-size:15.99px;color:#d8d8d8;transform:scaleX(1.080);">0</span><div style="left:1153.6px;top:677.3px;width:6px;height:1.4px;background:#bcbcbc"></div><span class="t" style="left:1143.86px;top:672.07px;font-size:15.99px;color:#d8d8d8;transform:scaleX(1.080);">0</span><div style="left:1247.35px;top:678px;width:1.4px;height:6.5px;background:#bcbcbc"></div><span class="t" style="left:1235.73px;top:689.17px;font-size:15.99px;color:#d8d8d8;transform:scaleX(1.080);">0,1</span><div style="left:1153.6px;top:610.56px;width:6px;height:1.4px;background:#bcbcbc"></div><span class="t" style="left:1129.63px;top:605.13px;font-size:15.99px;color:#d8d8d8;transform:scaleX(1.080);">0,1</span><div style="left:1335.2px;top:678px;width:1.4px;height:6.5px;background:#bcbcbc"></div><span class="t" style="left:1323.59px;top:689.17px;font-size:15.99px;color:#d8d8d8;transform:scaleX(1.080);">0,2</span><div style="left:1153.6px;top:543.82px;width:6px;height:1.4px;background:#bcbcbc"></div><span class="t" style="left:1129.66px;top:538.19px;font-size:15.99px;color:#d8d8d8;transform:scaleX(1.080);">0,2</span><div style="left:1423.05px;top:678px;width:1.4px;height:6.5px;background:#bcbcbc"></div><span class="t" style="left:1411.38px;top:689.17px;font-size:15.99px;color:#d8d8d8;transform:scaleX(1.080);">0,3</span><div style="left:1153.6px;top:477.08px;width:6px;height:1.4px;background:#bcbcbc"></div><span class="t" style="left:1129.54px;top:471.25px;font-size:15.99px;color:#d8d8d8;transform:scaleX(1.080);">0,3</span><div style="left:1510.9px;top:678px;width:1.4px;height:6.5px;background:#bcbcbc"></div><span class="t" style="left:1499.11px;top:689.17px;font-size:15.99px;color:#d8d8d8;transform:scaleX(1.080);">0,4</span><div style="left:1153.6px;top:410.34px;width:6px;height:1.4px;background:#bcbcbc"></div><span class="t" style="left:1129.3px;top:404.31px;font-size:15.99px;color:#d8d8d8;transform:scaleX(1.080);">0,4</span><div style="left:1598.75px;top:678px;width:1.4px;height:6.5px;background:#bcbcbc"></div><span class="t" style="left:1587.07px;top:689.17px;font-size:15.99px;color:#d8d8d8;transform:scaleX(1.080);">0,5</span><div style="left:1153.6px;top:343.6px;width:6px;height:1.4px;background:#bcbcbc"></div><span class="t" style="left:1129.51px;top:337.37px;font-size:15.99px;color:#d8d8d8;transform:scaleX(1.080);">0,5</span><div style="left:1686.6px;top:678px;width:1.4px;height:6.5px;background:#bcbcbc"></div><span class="t" style="left:1674.93px;top:689.17px;font-size:15.99px;color:#d8d8d8;transform:scaleX(1.080);">0,6</span><div style="left:1153.6px;top:276.86px;width:6px;height:1.4px;background:#bcbcbc"></div><span class="t" style="left:1129.54px;top:270.43px;font-size:15.99px;color:#d8d8d8;transform:scaleX(1.080);">0,6</span><div style="left:1774.45px;top:678px;width:1.4px;height:6.5px;background:#bcbcbc"></div><span class="t" style="left:1762.84px;top:689.17px;font-size:15.99px;color:#d8d8d8;transform:scaleX(1.080);">0,7</span><div style="left:1153.6px;top:210.12px;width:6px;height:1.4px;background:#bcbcbc"></div><span class="t" style="left:1129.66px;top:203.49px;font-size:15.99px;color:#d8d8d8;transform:scaleX(1.080);">0,7</span><div style="left:1862.3px;top:678px;width:1.4px;height:6.5px;background:#bcbcbc"></div><span class="t" style="left:1850.63px;top:689.17px;font-size:15.99px;color:#d8d8d8;transform:scaleX(1.080);">0,8</span><div style="left:1153.6px;top:143.38px;width:6px;height:1.4px;background:#bcbcbc"></div><span class="t" style="left:1129.54px;top:136.55px;font-size:15.99px;color:#d8d8d8;transform:scaleX(1.080);">0,8</span><div class="cie" style="left:1163px;top:120px;width:640px;height:554px;clip-path:polygon(146px 552.92px,144.15px 551.76px,141.96px 550.23px,139.06px 548.29px,137.21px 547.07px,135.1px 545.69px,132.79px 544.15px,130.2px 542.36px,127.3px 540.25px,124.08px 537.71px,121.8px 535.8px,119.38px 533.66px,116.67px 530.95px,114.88px 529.02px,113px 526.92px,111.01px 524.6px,108.91px 522px,106.7px 519.07px,104.78px 516.41px,102.79px 513.6px,100.73px 510.58px,98.58px 507.31px,96.34px 503.72px,94px 499.77px,91.56px 495.49px,89.04px 490.95px,86.42px 486.1px,83.7px 480.88px,80.88px 475.26px,77.95px 469.18px,74.87px 462.67px,71.64px 455.8px,68.3px 448.52px,64.91px 440.79px,61.5px 432.58px,58.11px 423.84px,54.73px 414.56px,51.3px 404.76px,47.85px 394.47px,44.41px 383.72px,41.01px 372.54px,37.66px 360.95px,34.32px 348.83px,30.95px 336.14px,27.61px 323.01px,24.37px 309.59px,21.29px 296.02px,18.43px 282.44px,15.75px 268.71px,13.17px 254.66px,10.75px 240.47px,8.55px 226.29px,6.61px 212.28px,5px 198.61px,3.67px 185.15px,2.56px 171.75px,1.72px 158.53px,1.2px 145.6px,1.02px 133.05px,1.23px 121.01px,1.81px 109.34px,2.73px 97.95px,4px 86.95px,5.63px 76.46px,7.62px 66.6px,9.99px 57.49px,12.77px 49.04px,15.97px 41.16px,19.53px 33.91px,23.39px 27.34px,27.51px 21.51px,31.81px 16.49px,36.35px 12.34px,41.22px 9.03px,46.34px 6.45px,51.65px 4.5px,57.08px 3.09px,62.55px 2.12px,68.08px 1.73px,73.78px 2.04px,79.61px 2.89px,85.52px 4.13px,91.46px 5.61px,97.36px 7.17px,103.27px 8.9px,109.22px 10.95px,115.19px 13.23px,121.14px 15.67px,127.05px 18.18px,132.86px 20.69px,138.58px 23.21px,144.23px 25.82px,149.83px 28.5px,155.38px 31.24px,160.9px 34.04px,166.38px 36.89px,171.83px 39.79px,177.23px 42.74px,182.6px 45.75px,187.94px 48.82px,193.27px 51.93px,198.6px 55.1px,203.92px 58.31px,209.23px 61.58px,214.53px 64.9px,219.82px 68.27px,225.1px 71.67px,230.38px 75.1px,235.64px 78.57px,240.88px 82.09px,246.12px 85.63px,251.35px 89.22px,256.58px 92.82px,261.81px 96.45px,267.04px 100.1px,272.27px 103.79px,277.49px 107.49px,282.71px 111.22px,287.94px 114.97px,293.17px 118.74px,298.4px 122.52px,303.65px 126.33px,308.89px 130.15px,314.14px 133.99px,319.38px 137.84px,324.61px 141.69px,329.84px 145.55px,335.05px 149.43px,340.27px 153.31px,345.48px 157.21px,350.68px 161.1px,355.88px 164.98px,361.08px 168.87px,366.29px 172.76px,371.48px 176.64px,376.67px 180.53px,381.84px 184.41px,386.98px 188.27px,392.11px 192.13px,397.22px 195.99px,402.32px 199.84px,407.39px 203.68px,412.44px 207.5px,417.46px 211.3px,422.46px 215.08px,427.44px 218.85px,432.4px 222.61px,437.32px 226.34px,442.22px 230.04px,447.07px 233.72px,451.89px 237.37px,456.68px 241px,461.44px 244.61px,466.16px 248.18px,470.83px 251.72px,475.44px 255.21px,480.02px 258.67px,484.56px 262.09px,489.05px 265.48px,493.49px 268.82px,497.86px 272.12px,502.15px 275.37px,506.38px 278.57px,510.55px 281.74px,514.66px 284.87px,518.7px 287.94px,522.64px 290.93px,526.49px 293.85px,530.23px 296.69px,533.87px 299.45px,537.43px 302.14px,540.91px 304.77px,544.31px 307.34px,547.66px 309.87px,550.95px 312.36px,554.17px 314.8px,557.33px 317.19px,560.4px 319.51px,563.39px 321.77px,566.28px 323.95px,569.62px 326.47px,572.84px 328.88px,575.92px 331.19px,578.89px 333.42px,581.74px 335.57px,584.48px 337.64px,587.1px 339.63px,589.6px 341.53px,592px 343.36px,594.3px 345.11px,597.03px 347.19px,599.6px 349.14px,602.02px 350.97px,604.32px 352.72px,607.2px 354.88px,609.84px 356.87px,612.32px 358.73px,614.61px 360.46px,616.73px 362.07px,618.73px 363.6px,621.53px 365.73px,624.09px 367.67px,626.4px 369.43px,628.48px 371.01px,630.35px 372.39px,631.99px 373.61px,634.63px 375.61px,636.65px 377.15px,638.14px 378.28px,638.7px 378.71px)"><i style="left:62px;top:0px;width:14px;height:2px;background:linear-gradient(90deg,#0f0,#0f0)"></i><i style="left:51px;top:2px;width:36px;height:2px;background:linear-gradient(90deg,#0f0,#0f0)"></i><i style="left:45px;top:4px;width:50px;height:2px;background:linear-gradient(90deg,#0f0,#0f0)"></i><i style="left:41px;top:6px;width:62px;height:2px;background:linear-gradient(90deg,#0f0,#0f0)"></i><i style="left:37px;top:8px;width:72px;height:2px;background:linear-gradient(90deg,#0f0,#0f0)"></i><i style="left:34px;top:10px;width:80px;height:2px;background:linear-gradient(90deg,#0f0,#0f0)"></i><i style="left:32px;top:12px;width:88px;height:2px;background:linear-gradient(90deg,#0f0,#0f0)"></i><i style="left:30px;top:14px;width:94px;height:2px;background:linear-gradient(90deg,#0f0,#0f0)"></i><i style="left:28px;top:16px;width:101px;height:2px;background:linear-gradient(90deg,#0f0,#0f0)"></i><i style="left:26px;top:18px;width:108px;height:2px;background:linear-gradient(90deg,#00ff01,#0f0)"></i><i style="left:25px;top:20px;width:113px;height:2px;background:linear-gradient(90deg,#00ff02,#0f0)"></i><i style="left:23px;top:22px;width:120px;height:2px;background:linear-gradient(90deg,#00ff03,#0f0 93.3%,#0f0)"></i><i style="left:22px;top:24px;width:125px;height:2px;background:linear-gradient(90deg,#00ff04,#0f0 45.6%,#0f0)"></i><i style="left:21px;top:26px;width:130px;height:2px;background:linear-gradient(90deg,#00ff05,#0f0 40%,#0f0)"></i><i style="left:19px;top:28px;width:136px;height:2px;background:linear-gradient(90deg,#00ff06,#0f0 37.5%,#0f0)"></i><i style="left:18px;top:30px;width:141px;height:2px;background:linear-gradient(90deg,#00ff07,#0f0 37.6%,#0f0)"></i><i style="left:17px;top:32px;width:146px;height:2px;background:linear-gradient(90deg,#00ff07,#0f0 38.4%,#0f0)"></i><i style="left:16px;top:34px;width:151px;height:2px;background:linear-gradient(90deg,#00ff08,#0f0 39.1%,#0f0)"></i><i style="left:15px;top:36px;width:156px;height:2px;background:linear-gradient(90deg,#00ff09,#0f0 40.4%,#0f0)"></i><i style="left:14px;top:38px;width:161px;height:2px;background:linear-gradient(90deg,#00ff0a,#0f0 41%,#0f0)"></i><i style="left:13px;top:40px;width:165px;height:2px;background:linear-gradient(90deg,#00ff0b,#0f0 42.4%,#0f0)"></i><i style="left:12px;top:42px;width:170px;height:2px;background:linear-gradient(90deg,#00ff0c,#0f0 43.5%,#0f0)"></i><i style="left:12px;top:44px;width:174px;height:2px;background:linear-gradient(90deg,#00ff0d,#0f0 44.3%,#0f0)"></i><i style="left:11px;top:46px;width:178px;height:2px;background:linear-gradient(90deg,#00ff0e,#0f0 45.5%,#0f0)"></i><i style="left:10px;top:48px;width:182px;height:2px;background:linear-gradient(90deg,#00ff0e,#0f0 46.7%,#0f0)"></i><i style="left:9px;top:50px;width:187px;height:2px;background:linear-gradient(90deg,#00ff0f,#0f0 47.6%,#0f0)"></i><i style="left:9px;top:52px;width:190px;height:2px;background:linear-gradient(90deg,#00ff10,#0f0 48.4%,#0f0)"></i><i style="left:8px;top:54px;width:195px;height:2px;background:linear-gradient(90deg,#0f1,#0f0 49.7%,#0f0)"></i><i style="left:7px;top:56px;width:199px;height:2px;background:linear-gradient(90deg,#00ff12,#0f0 50.8%,#0f0)"></i><i style="left:7px;top:58px;width:202px;height:2px;background:linear-gradient(90deg,#00ff13,#0f0 51.5%,#0f0)"></i><i style="left:6px;top:60px;width:206px;height:2px;background:linear-gradient(90deg,#00ff14,#0f0 52.4%,#0f0)"></i><i style="left:6px;top:62px;width:210px;height:2px;background:linear-gradient(90deg,#00ff14,#0f0 52.9%,#0f0)"></i><i style="left:5px;top:64px;width:214px;height:2px;background:linear-gradient(90deg,#00ff15,#0f0 53.7%,#0f0)"></i><i style="left:5px;top:66px;width:217px;height:2px;background:linear-gradient(90deg,#00ff16,#0f0 54.8%,#0f0)"></i><i style="left:4px;top:68px;width:221px;height:2px;background:linear-gradient(90deg,#00ff17,#0f0 55.7%,#0f0)"></i><i style="left:4px;top:70px;width:224px;height:2px;background:linear-gradient(90deg,#00ff18,#0f0 56.2%,#0f0)"></i><i style="left:4px;top:72px;width:227px;height:2px;background:linear-gradient(90deg,#00ff19,#0f0 56.8%,#0f0)"></i><i style="left:3px;top:74px;width:231px;height:2px;background:linear-gradient(90deg,#00ff1a,#0f0 57.6%,#0f0)"></i><i style="left:3px;top:76px;width:234px;height:2px;background:linear-gradient(90deg,#00ff1b,#0f0 58.5%,#0f0)"></i><i style="left:3px;top:78px;width:237px;height:2px;background:linear-gradient(90deg,#00ff1b,#0f0 59.1%,#0f0)"></i><i style="left:2px;top:80px;width:241px;height:2px;background:linear-gradient(90deg,#00ff1c,#0f0 59.8%,#0f0)"></i><i style="left:2px;top:82px;width:244px;height:2px;background:linear-gradient(90deg,#00ff1d,#0f0 60.2%,#0f0)"></i><i style="left:2px;top:84px;width:247px;height:2px;background:linear-gradient(90deg,#00ff1e,#0f0 61.1%,#0f0)"></i><i style="left:1px;top:86px;width:251px;height:2px;background:linear-gradient(90deg,#00ff1f,#0f0 61.8%,#0f0)"></i><i style="left:1px;top:88px;width:254px;height:2px;background:linear-gradient(90deg,#00ff20,#0f0 62.2%,#0f0)"></i><i style="left:1px;top:90px;width:257px;height:2px;background:linear-gradient(90deg,#00ff21,#0f0 62.6%,#0f0)"></i><i style="left:1px;top:92px;width:260px;height:2px;background:linear-gradient(90deg,#0f2,#0f0 63.5%,#0f0)"></i><i style="left:0px;top:94px;width:264px;height:2px;background:linear-gradient(90deg,#00ff23,#0f0 64%,#0f0)"></i><i style="left:0px;top:96px;width:267px;height:2px;background:linear-gradient(90deg,#00ff24,#0f0 64.4%,#0f0)"></i><i style="left:0px;top:98px;width:269px;height:2px;background:linear-gradient(90deg,#00ff25,#0f0 65.1%,#0f0)"></i><i style="left:0px;top:100px;width:272px;height:2px;background:linear-gradient(90deg,#00ff26,#0f0 65.4%,#0f0)"></i><i style="left:0px;top:102px;width:275px;height:2px;background:linear-gradient(90deg,#00ff26,#0f0 66.2%,#0f0)"></i><i style="left:0px;top:104px;width:278px;height:2px;background:linear-gradient(90deg,#00ff27,#0f0 66.5%,#0f0)"></i><i style="left:0px;top:106px;width:281px;height:2px;background:linear-gradient(90deg,#00ff28,#0f0 66.9%,#02ff00)"></i><i style="left:0px;top:108px;width:283px;height:2px;background:linear-gradient(90deg,#00ff29,#0f0 67.5%,#02ff00 98.9%,#05ff00)"></i><i style="left:0px;top:110px;width:286px;height:2px;background:linear-gradient(90deg,#00ff2a,#0f0 68.2%,#03ff00 97.9%,#0aff00)"></i><i style="left:0px;top:112px;width:289px;height:2px;background:linear-gradient(90deg,#00ff2b,#0f0 68.5%,#02ff00 96.5%,#0eff00)"></i><i style="left:0px;top:114px;width:292px;height:2px;background:linear-gradient(90deg,#00ff2c,#0f0 68.8%,#02ff00 95.2%,#13ff00)"></i><i style="left:0px;top:116px;width:295px;height:2px;background:linear-gradient(90deg,#00ff2d,#0f0 69.5%,#02ff00 93.9%,#17ff00)"></i><i style="left:0px;top:118px;width:297px;height:2px;background:linear-gradient(90deg,#00ff2e,#0f0 70%,#03ff00 93.3%,#1bff00)"></i><i style="left:0px;top:120px;width:300px;height:2px;background:linear-gradient(90deg,#00ff2f,#0f0 70.3%,#02ff00 92%,#1fff00)"></i><i style="left:0px;top:122px;width:303px;height:2px;background:linear-gradient(90deg,#00ff30,#0f0 66.7%,#02ff00 90.8%,#24ff00)"></i><i style="left:0px;top:124px;width:306px;height:2px;background:linear-gradient(90deg,#00ff31,#00ff01 66%,#02ff00 89.5%,#29ff00)"></i><i style="left:0px;top:126px;width:308px;height:2px;background:linear-gradient(90deg,#00ff32,#00ff03 65.3%,#02ff00 89%,#2dff00)"></i><i style="left:0px;top:128px;width:311px;height:2px;background:linear-gradient(90deg,#0f3,#00ff04 64.6%,#0f0 77.8%,#02ff00 87.8%,#32ff00)"></i><i style="left:0px;top:130px;width:314px;height:2px;background:linear-gradient(90deg,#00ff34,#00ff05 63.7%,#0f0 74.5%,#02ff00 86.6%,#38ff00)"></i><i style="left:0px;top:132px;width:317px;height:2px;background:linear-gradient(90deg,#00ff35,#00ff06 63.1%,#0f0 73.8%,#02ff00 85.5%,#3dff00)"></i><i style="left:0px;top:134px;width:319px;height:2px;background:linear-gradient(90deg,#00ff36,#00ff07 62.4%,#0f0 74%,#02ff00 85%,#41ff00)"></i><i style="left:0px;top:136px;width:322px;height:2px;background:linear-gradient(90deg,#00ff37,#0f0 73.6%,#02ff00 83.9%,#47ff00)"></i><i style="left:0px;top:138px;width:325px;height:2px;background:linear-gradient(90deg,#00ff38,#00ff09 61.2%,#0f0 74.2%,#02ff00 82.8%,#4cff00)"></i><i style="left:0px;top:140px;width:328px;height:2px;background:linear-gradient(90deg,#00ff39,#00ff0b 60.4%,#0f0 74.4%,#03ff00 82%,#52ff00)"></i><i style="left:0px;top:142px;width:330px;height:2px;background:linear-gradient(90deg,#00ff3a,#00ff0c 60%,#0f0 74.8%,#02ff00 81.2%,#57ff00)"></i><i style="left:0px;top:144px;width:333px;height:2px;background:linear-gradient(90deg,#00ff3b,#00ff0d 59.2%,#0f0 75.1%,#02ff00 80.2%,#5dff00)"></i><i style="left:0px;top:146px;width:336px;height:2px;background:linear-gradient(90deg,#00ff3d,#00ff0e 58.6%,#0f0 75.3%,#03ff00 79.5%,#63ff00)"></i><i style="left:0px;top:148px;width:338px;height:2px;background:linear-gradient(90deg,#00ff3e,#00ff10 58%,#0f0 75.7%,#03ff00 78.7%,#6f0 99.7%,#68ff00)"></i><i style="left:0px;top:150px;width:341px;height:2px;background:linear-gradient(90deg,#00ff3f,#0f1 57.5%,#0f0 76%,#05ff00 78.3%,#68ff00 98.8%,#6eff00)"></i><i style="left:0px;top:152px;width:344px;height:2px;background:linear-gradient(90deg,#00ff40,#00ff12 56.7%,#0f0 76.2%,#5cff00 95.3%,#75ff00)"></i><i style="left:0px;top:154px;width:346px;height:2px;background:linear-gradient(90deg,#00ff41,#00ff13 56.4%,#02ff00 76%,#64ff00 96%,#7aff00)"></i><i style="left:0px;top:156px;width:349px;height:2px;background:linear-gradient(90deg,#00ff42,#00ff15 55.9%,#01ff00 75.1%,#64ff00 94.8%,#81ff00)"></i><i style="left:0px;top:158px;width:352px;height:2px;background:linear-gradient(90deg,#00ff43,#00ff16 55.1%,#02ff00 74.4%,#6f0 94%,#8f0)"></i><i style="left:0px;top:160px;width:354px;height:2px;background:linear-gradient(90deg,#00ff45,#00ff17 54.8%,#02ff02 73.7%,#64ff00 92.9%,#8eff00)"></i><i style="left:0px;top:162px;width:357px;height:2px;background:linear-gradient(90deg,#00ff46,#00ff19 54.1%,#02ff03 72.8%,#34ff00 82.9%,#95ff00)"></i><i style="left:0px;top:164px;width:360px;height:2px;background:linear-gradient(90deg,#00ff47,#00ff1a 53.6%,#01ff05 71.9%,#28ff00 79.7%,#8dff00 97.5%,#9dff00)"></i><i style="left:0px;top:166px;width:362px;height:2px;background:linear-gradient(90deg,#00ff48,#00ff1b 53.3%,#02ff06 71.5%,#2bff00 79.6%,#8fff00 97%,#a3ff00)"></i><i style="left:0px;top:168px;width:365px;height:2px;background:linear-gradient(90deg,#00ff49,#00ff1d 52.6%,#02ff08 70.7%,#2fff00 79.5%,#93ff00 96.4%,#abff00)"></i><i style="left:0px;top:170px;width:368px;height:2px;background:linear-gradient(90deg,#00ff4b,#00ff1e 52.2%,#02ff09 69.8%,#3f0 79.3%,#9f0 96.2%,#b3ff00)"></i><i style="left:0px;top:172px;width:370px;height:2px;background:linear-gradient(90deg,#00ff4c,#00ff20 51.6%,#03ff0b 69.5%,#39ff00 79.7%,#9fff00 96.2%,#baff00)"></i><i style="left:0px;top:174px;width:373px;height:2px;background:linear-gradient(90deg,#00ff4d,#00ff21 51.2%,#02ff0c 68.6%,#3fff00 79.9%,#a6ff00 96%,#c3ff00)"></i><i style="left:0px;top:176px;width:376px;height:2px;background:linear-gradient(90deg,#00ff4e,#0f2 50.8%,#02ff0e 67.8%,#46ff00 80.1%,#acff00 95.7%,#cbff00)"></i><i style="left:1px;top:178px;width:377px;height:2px;background:linear-gradient(90deg,#00ff50,#00ff24 50.4%,#02ff10 67.1%,#4cff00 80.4%,#b2ff00 95.8%,#d2ff00)"></i><i style="left:1px;top:180px;width:380px;height:2px;background:linear-gradient(90deg,#00ff51,#00ff25 50%,#03ff11 66.6%,#52ff00 80.5%,#b9ff00 95.5%,#dcff00)"></i><i style="left:1px;top:182px;width:383px;height:2px;background:linear-gradient(90deg,#00ff52,#00ff27 49.3%,#02ff13 65.8%,#59ff00 80.7%,#c0ff00 95.3%,#e5ff00)"></i><i style="left:1px;top:184px;width:385px;height:2px;background:linear-gradient(90deg,#00ff54,#00ff28 49.1%,#02ff14 65.2%,#60ff00 81%,#c7ff00 95.3%,#edff00)"></i><i style="left:1px;top:186px;width:388px;height:2px;background:linear-gradient(90deg,#0f5,#00ff2a 48.5%,#01ff16 64.4%,#64ff00 80.7%,#cf0 94.8%,#f7ff00)"></i><i style="left:1px;top:188px;width:391px;height:2px;background:linear-gradient(90deg,#00ff56,#00ff2b 48.1%,#02ff18 63.9%,#6f0 80.1%,#cdff00 93.9%,#fffc00)"></i><i style="left:2px;top:190px;width:392px;height:2px;background:linear-gradient(90deg,#00ff57,#00ff2c 48%,#02ff19 63.3%,#64ff02 79.1%,#cf0 92.9%,#fffd00 99%,#fff500)"></i><i style="left:2px;top:192px;width:395px;height:2px;background:linear-gradient(90deg,#00ff59,#00ff2e 47.3%,#02ff1b 62.5%,#64ff04 78.2%,#9aff00 85.6%,#fffe00 97.7%,#ffeb00)"></i><i style="left:2px;top:194px;width:398px;height:2px;background:linear-gradient(90deg,#00ff5a,#00ff30 47%,#01ff1d 61.8%,#65ff05 77.4%,#8fff00 83.2%,#f8ff00 95.7%,#fffd00 96.7%,#ffe200)"></i><i style="left:2px;top:196px;width:400px;height:2px;background:linear-gradient(90deg,#00ff5c,#00ff31 46.8%,#02ff1e 61.5%,#65ff07 76.8%,#95ff00 83.2%,#fffe00 95.8%,#ffdb00)"></i><i style="left:2px;top:198px;width:403px;height:2px;background:linear-gradient(90deg,#00ff5d,#0f3 46.2%,#02ff20 60.8%,#65ff09 75.9%,#9cff00 83.1%,#fffc00 94.8%,#ffd200)"></i><i style="left:3px;top:200px;width:405px;height:2px;background:linear-gradient(90deg,#00ff5e,#00ff34 45.9%,#02ff22 60%,#65ff0b 75.1%,#a4ff00 83.2%,#fffd00 93.6%,#ffca00)"></i><i style="left:3px;top:202px;width:407px;height:2px;background:linear-gradient(90deg,#00ff60,#00ff36 45.5%,#01ff24 59.5%,#64ff0e 74.2%,#adff00 83.5%,#fffe00 92.6%,#ffc900 99.3%,#ffc400)"></i><i style="left:3px;top:204px;width:410px;height:2px;background:linear-gradient(90deg,#00ff61,#00ff38 45.1%,#02ff26 59%,#66ff0f 73.7%,#b6ff00 83.7%,#fffd00 91.7%,#ffc800 98.3%,#ffbc00)"></i><i style="left:3px;top:206px;width:413px;height:2px;background:linear-gradient(90deg,#00ff63,#00ff39 44.8%,#02ff28 58.4%,#64ff12 72.6%,#c0ff00 83.8%,#fffe00 90.6%,#ffc800 97.1%,#ffb500)"></i><i style="left:4px;top:208px;width:414px;height:2px;background:linear-gradient(90deg,#00ff64,#00ff3b 44.4%,#02ff2a 57.7%,#64ff14 72%,#caff00 84.1%,#fffd00 89.9%,#ffc700 96.4%,#ffb000)"></i><i style="left:4px;top:210px;width:417px;height:2px;background:linear-gradient(90deg,#0f6,#00ff3c 44.1%,#01ff2c 57.1%,#64ff16 71.2%,#cdff00 83.5%,#fffd00 88.7%,#ffc900 95%,#ffa900)"></i><i style="left:4px;top:212px;width:420px;height:2px;background:linear-gradient(90deg,#00ff67,#00ff3e 43.8%,#02ff2d 56.7%,#65ff18 70.5%,#ccff01 82.4%,#fffe00 87.6%,#ffc900 93.8%,#ffa300)"></i><i style="left:4px;top:214px;width:422px;height:2px;background:linear-gradient(90deg,#00ff69,#00ff40 43.6%,#02ff2f 56.2%,#65ff1a 69.9%,#cdff03 81.8%,#fffd00 87%,#ffc800 93.1%,#ff9e00)"></i><i style="left:5px;top:216px;width:424px;height:2px;background:linear-gradient(90deg,#00ff6a,#00ff42 43.2%,#02ff32 55.4%,#65ff1c 69.1%,#ceff06 80.9%,#feff00 85.6%,#ffc300 92.7%,#ff9800)"></i><i style="left:5px;top:218px;width:426px;height:2px;background:linear-gradient(90deg,#00ff6c,#00ff43 43%,#01ff34 54.9%,#63ff1f 68.3%,#caff09 79.8%,#fffd00 85.2%,#ffc700 91.3%,#ff9600 99.5%,#ff9300)"></i><i style="left:5px;top:220px;width:429px;height:2px;background:linear-gradient(90deg,#00ff6d,#00ff45 42.7%,#02ff35 54.5%,#66ff21 67.8%,#cdff0b 79.3%,#fffe00 84.1%,#ffc700 90.2%,#ff9700 98.1%,#ff8e00)"></i><i style="left:5px;top:222px;width:432px;height:2px;background:linear-gradient(90deg,#00ff6f,#00ff47 42.1%,#02ff38 53.9%,#64ff23 66.9%,#ccff0e 78.2%,#ffff03 83.1%,#ffc900 88.9%,#ff9800 96.8%,#ff8900)"></i><i style="left:6px;top:224px;width:433px;height:2px;background:linear-gradient(90deg,#00ff71,#00ff49 42%,#01ff3a 53.3%,#64ff26 66.3%,#cbff10 77.4%,#fffd05 82.4%,#ffd300 86.8%,#ffa100 94.2%,#ff8400)"></i><i style="left:6px;top:226px;width:436px;height:2px;background:linear-gradient(90deg,#00ff72,#00ff4b 41.7%,#01ff3c 52.8%,#64ff28 65.6%,#ccff13 76.6%,#fffe08 81.4%,#ffd000 86.2%,#ff9e00 93.6%,#ff7f00)"></i><i style="left:6px;top:228px;width:439px;height:2px;background:linear-gradient(90deg,#00ff74,#00ff4d 41.5%,#02ff3e 52.4%,#65ff2a 64.9%,#cdff15 75.9%,#fffd0a 80.6%,#ffc700 86.3%,#ff9700 93.8%,#ff7b00)"></i><i style="left:7px;top:230px;width:440px;height:2px;background:linear-gradient(90deg,#00ff75,#00ff4e 41.1%,#02ff40 51.8%,#65ff2d 64.3%,#ccff18 75%,#fffe0d 79.8%,#ffc700 85.5%,#ff9700 93%,#f70)"></i><i style="left:7px;top:232px;width:443px;height:2px;background:linear-gradient(90deg,#0f7,#00ff50 40.9%,#01ff43 51.2%,#63ff2f 63.4%,#caff1b 74%,#ff1 78.8%,#ffca03 84.2%,#f90 91.4%,#ff7200)"></i><i style="left:7px;top:234px;width:446px;height:2px;background:linear-gradient(90deg,#00ff79,#00ff52 40.6%,#03ff45 50.9%,#65ff31 63%,#ceff1d 73.5%,#fffd13 78%,#ffc805 83.4%,#ffa700 88.1%,#ff7900 97.1%,#ff6e00)"></i><i style="left:8px;top:236px;width:447px;height:2px;background:linear-gradient(90deg,#00ff7b,#00ff54 40.5%,#02ff47 50.3%,#66ff34 62.4%,#cdff20 72.7%,#fffe16 77.2%,#ffc907 82.6%,#ffa400 87.7%,#ff7600 96.9%,#ff6b00)"></i><i style="left:8px;top:238px;width:450px;height:2px;background:linear-gradient(90deg,#00ff7c,#00ff56 40.2%,#02ff49 49.8%,#64ff37 61.6%,#cbff23 71.8%,#fffd19 76.4%,#ffc709 81.8%,#ff9d00 87.8%,#ff7100 97.1%,#f60)"></i><i style="left:8px;top:240px;width:452px;height:2px;background:linear-gradient(90deg,#00ff7e,#00ff58 40%,#01ff4c 49.3%,#64ff39 61.1%,#ccff26 71.2%,#fffe1c 75.7%,#ffc80c 81%,#ff9800 87.8%,#ff6c00 97.6%,#ff6300)"></i><i style="left:9px;top:242px;width:454px;height:2px;background:linear-gradient(90deg,#00ff80,#00ff5a 39.6%,#03ff4e 48.9%,#64ff3c 60.4%,#cbff29 70.3%,#ffff1f 74.7%,#ffca0f 79.7%,#f90 86.6%,#ff6d00 96%,#ff5f00)"></i><i style="left:9px;top:244px;width:457px;height:2px;background:linear-gradient(90deg,#00ff82,#00ff5c 39.4%,#02ff51 48.4%,#65ff3f 59.7%,#ccff2c 69.6%,#fffd22 74%,#ffc911 79%,#ff9802 85.8%,#ff6c00 95.2%,#ff5c00)"></i><i style="left:9px;top:246px;width:459px;height:2px;background:linear-gradient(90deg,#00ff84,#00ff5f 39.2%,#02ff53 47.9%,#65ff41 59.3%,#cdff2f 69.1%,#fffe25 73.2%,#ffc914 78.2%,#ff9804 85%,#ff7b00 90.6%,#ff5900)"></i><i style="left:10px;top:248px;width:461px;height:2px;background:linear-gradient(90deg,#00ff85,#00ff61 39%,#01ff56 47.3%,#63ff44 58.4%,#c9ff32 67.9%,#fffd28 72.5%,#ffc816 77.4%,#ff9706 84.2%,#ff7b00 89.6%,#f50)"></i><i style="left:10px;top:250px;width:464px;height:2px;background:linear-gradient(90deg,#00ff87,#00ff63 38.8%,#02ff58 47%,#65ff47 58%,#cdff35 67.5%,#fffe2c 71.6%,#ffc819 76.5%,#ff9708 83.2%,#ff7800 89.2%,#ff5200)"></i><i style="left:10px;top:252px;width:466px;height:2px;background:linear-gradient(90deg,#00ff89,#00ff65 38.6%,#02ff5b 46.6%,#66ff4a 57.5%,#ceff38 67%,#ffff2f 70.8%,#ffc91c 75.8%,#ff980b 82.2%,#ff7300 89.5%,#ff4f00)"></i><i style="left:11px;top:254px;width:468px;height:2px;background:linear-gradient(90deg,#00ff8b,#00ff67 38.5%,#02ff5d 45.9%,#64ff4d 56.6%,#caff3c 65.8%,#fffd32 70.1%,#ffc71e 75%,#ff970c 81.4%,#ff6f00 89.3%,#ff4c00)"></i><i style="left:11px;top:256px;width:471px;height:2px;background:linear-gradient(90deg,#00ff8d,#00ff6a 38.2%,#01ff60 45.4%,#64ff50 56.1%,#cbff3f 65.2%,#fffe36 69.2%,#ffc922 73.9%,#ff980f 80.3%,#ff6c00 89%,#ff4800)"></i><i style="left:11px;top:258px;width:473px;height:2px;background:linear-gradient(90deg,#00ff8f,#00ff6c 38.1%,#02ff63 45.2%,#64ff53 55.6%,#ccff42 64.7%,#fffd38 68.7%,#ffc824 73.4%,#ff9711 79.7%,#ff6b00 88.4%,#ff4600)"></i><i style="left:12px;top:260px;width:475px;height:2px;background:linear-gradient(90deg,#00ff91,#00ff6e 37.9%,#02ff65 44.6%,#65ff56 54.9%,#cbff45 63.8%,#fffe3c 67.8%,#ffc827 72.4%,#ff9814 78.5%,#ff6c02 86.9%,#ff4500 99.2%,#ff4300)"></i><i style="left:12px;top:262px;width:478px;height:2px;background:linear-gradient(90deg,#00ff93,#00ff71 37.7%,#01ff68 44.1%,#65ff59 54.4%,#ccff48 63.2%,#ffff40 66.9%,#ffc92a 71.5%,#ff9816 77.6%,#ff6c04 86%,#ff5400 92.5%,#ff4000)"></i><i style="left:12px;top:264px;width:480px;height:2px;background:linear-gradient(90deg,#00ff96,#00ff73 37.7%,#01ff6b 43.8%,#63ff5c 53.8%,#cbff4c 62.5%,#fffd43 66.5%,#ffc72d 71%,#ff9718 77.1%,#ff6b06 85.4%,#ff5400 91.7%,#ff3d00)"></i><i style="left:13px;top:266px;width:482px;height:2px;background:linear-gradient(90deg,#00ff98,#00ff75 37.6%,#02ff6e 43.4%,#65ff5f 53.3%,#ccff4f 61.8%,#fffe47 65.6%,#ffca31 69.9%,#ff9a1c 75.7%,#ff6d09 83.8%,#ff5200 91.1%,#ff3b00)"></i><i style="left:13px;top:268px;width:485px;height:2px;background:linear-gradient(90deg,#00ff9a,#00ff78 37.3%,#02ff71 42.9%,#63ff62 52.6%,#caff53 61%,#fffd4a 64.9%,#ffc833 69.3%,#ff981e 75.1%,#ff6c0a 83.1%,#ff4f00 91.1%,#ff3800)"></i><i style="left:13px;top:270px;width:487px;height:2px;background:linear-gradient(90deg,#00ff9c,#00ff7a 37.4%,#01ff74 42.5%,#64ff66 52.2%,#ccff57 60.6%,#fffe4f 64.3%,#ffc936 68.6%,#ff9820 74.3%,#ff6c0c 82.3%,#ff4c00 91.2%,#ff3600)"></i><i style="left:14px;top:272px;width:489px;height:2px;background:linear-gradient(90deg,#00ff9e,#00ff7d 37.2%,#01ff77 41.9%,#64ff69 51.5%,#caff5a 59.7%,#ffff53 63.4%,#ffc93a 67.7%,#ff9823 73.4%,#ff6d0f 81.2%,#ff4900 91.2%,#f30)"></i><i style="left:14px;top:274px;width:491px;height:2px;background:linear-gradient(90deg,#00ffa0,#00ff80 37.1%,#02ff7a 41.8%,#64ff6c 51.1%,#cbff5e 59.3%,#fffd56 62.9%,#ffc83c 67.2%,#ff9725 72.9%,#ff6a10 80.9%,#ff4500 91.4%,#ff3100)"></i><i style="left:15px;top:276px;width:493px;height:2px;background:linear-gradient(90deg,#00ffa3,#00ff82 36.9%,#02ff7d 41.2%,#64ff70 50.5%,#cdff62 58.6%,#fffe5b 62.1%,#ffc840 66.3%,#ff9728 72%,#ff6b12 79.7%,#f40 90.9%,#ff2f00)"></i><i style="left:15px;top:278px;width:496px;height:2px;background:linear-gradient(90deg,#00ffa5,#00ff85 36.9%,#01ff80 40.7%,#65ff73 50%,#cbff66 57.9%,#fffd5e 61.5%,#ffc642 65.7%,#ff952a 71.4%,#ff6a14 79%,#ff4300 90.1%,#ff2c00)"></i><i style="left:15px;top:280px;width:498px;height:2px;background:linear-gradient(90deg,#00ffa7,#0f8 36.9%,#03ff83 40.6%,#65ff77 49.6%,#ccff69 57.4%,#fffe62 60.8%,#ffc947 64.9%,#ff982e 70.3%,#ff6c17 77.7%,#ff4503 88.4%,#ff2a00)"></i><i style="left:16px;top:282px;width:500px;height:2px;background:linear-gradient(90deg,#0fa,#00ff8a 36.8%,#02ff87 40%,#65ff7a 49%,#ceff6d 56.8%,#ffff67 60%,#ffca4b 64%,#ff9831 69.4%,#ff6c19 76.8%,#ff4504 87.4%,#f30 94.6%,#ff2800)"></i><i style="left:16px;top:284px;width:503px;height:2px;background:linear-gradient(90deg,#00ffac,#00ff8d 36.8%,#02ff8a 39.6%,#63ff7e 48.3%,#c9ff72 55.9%,#fffd6a 59.4%,#ffc84d 63.4%,#ff9733 68.8%,#ff6b1b 76.1%,#ff4406 86.7%,#ff3200 93.6%,#ff2600)"></i><i style="left:17px;top:286px;width:504px;height:2px;background:linear-gradient(90deg,#00ffae,#00ff90 36.9%,#01ff8d 39.1%,#63ff82 47.8%,#caff76 55.4%,#ffff6f 58.7%,#ffc851 62.7%,#ff9837 67.9%,#ff6c1e 75%,#ff4508 85.3%,#ff3100 93.3%,#ff2400)"></i><i style="left:17px;top:288px;width:507px;height:2px;background:linear-gradient(90deg,#00ffb1,#00ff93 36.9%,#03ff91 38.9%,#66ff85 47.5%,#cfff79 55%,#fffd73 58.2%,#ffc754 62.1%,#ff9739 67.3%,#ff6b20 74.4%,#ff440a 84.6%,#ff2e00 93.3%,#f20)"></i><i style="left:18px;top:290px;width:509px;height:2px;background:linear-gradient(90deg,#00ffb3,#00ff96 36.7%,#02ff94 38.3%,#64ff8a 46.8%,#caff7e 54%,#fffe78 57.4%,#ffca59 61.1%,#ff983d 66.2%,#ff6c23 73.3%,#ff450c 83.3%,#ff2c00 93.1%,#ff2000)"></i><i style="left:18px;top:292px;width:511px;height:2px;background:linear-gradient(90deg,#00ffb6,#0f9 37%,#04ff98 38.2%,#67ff8d 46.6%,#cfff82 53.8%,#ffff7d 56.8%,#ffc85c 60.7%,#ff973f 65.8%,#ff6b24 72.8%,#ff440d 82.8%,#ff2a00 93.3%,#ff1e00)"></i><i style="left:18px;top:294px;width:514px;height:2px;background:linear-gradient(90deg,#00ffb9,#00ff9c 37%,#05ff9b 37.9%,#67ff91 46.1%,#d0ff86 53.3%,#fffd81 56.2%,#ffc860 59.9%,#ff9843 64.8%,#ff6c28 71.6%,#ff4510 81.3%,#ff2700 93.4%,#ff1c00)"></i><i style="left:19px;top:296px;width:515px;height:2px;background:linear-gradient(90deg,#0fb,#00ff9f 37.1%,#62ff96 45.2%,#c8ff8c 52.2%,#ffff86 55.5%,#ffc964 59.2%,#ff9846 64.1%,#ff6c2a 70.9%,#ff4412 80.6%,#ff2500 93.4%,#ff1a00)"></i><i style="left:19px;top:298px;width:518px;height:2px;background:linear-gradient(90deg,#00ffbe,#02ffa3 36.9%,#65ff9a 45%,#cdff90 51.9%,#fffd8a 55%,#ffc767 58.7%,#ff9748 63.5%,#ff6b2c 70.3%,#ff4313 79.9%,#ff2300 93.4%,#ff1800)"></i><i style="left:20px;top:300px;width:520px;height:2px;background:linear-gradient(90deg,#00ffc1,#02ffa7 36.3%,#63ff9e 44.2%,#cbff95 51.2%,#fffe8f 54.2%,#ffca6d 57.7%,#ff984d 62.5%,#ff6c30 69%,#ff4516 78.5%,#f20 92.5%,#ff1600)"></i><i style="left:20px;top:302px;width:522px;height:2px;background:linear-gradient(90deg,#00ffc4,#01ffab 36%,#63ffa2 43.9%,#c9ff9a 50.6%,#ffff95 53.6%,#ffc870 57.3%,#ff974f 62.1%,#ff6b32 68.6%,#ff4417 78%,#ff2100 92.1%,#ff1500)"></i><i style="left:21px;top:304px;width:524px;height:2px;background:linear-gradient(90deg,#00ffc6,#00ffaf 35.5%,#64ffa7 43.3%,#cbff9e 50%,#fffd99 53.1%,#ffc975 56.5%,#ff9854 61.1%,#ff6d36 67.4%,#ff451a 76.5%,#ff2203 90.3%,#ff1300)"></i><i style="left:21px;top:306px;width:527px;height:2px;background:linear-gradient(90deg,#00ffc9,#02ffb3 35.3%,#64ffab 42.9%,#ccffa3 49.5%,#ffff9f 52.4%,#ffc979 55.8%,#ff9857 60.3%,#ff6c38 66.6%,#ff451d 75.5%,#ff2304 89%,#ff1500 97.2%,#f10)"></i><i style="left:22px;top:308px;width:528px;height:2px;background:linear-gradient(90deg,#0fc,#01ffb7 34.8%,#64ffb0 42.4%,#caffa8 48.9%,#fffda3 51.9%,#ffc77c 55.3%,#ff975a 59.8%,#ff6b3a 66.1%,#ff441e 75%,#ff2205 88.4%,#ff1500 96.4%,#ff1000)"></i><i style="left:22px;top:310px;width:531px;height:2px;background:linear-gradient(90deg,#00ffcf,#01ffbb 34.5%,#62ffb5 41.8%,#c8ffad 48.2%,#fffea9 51.2%,#ffc881 54.6%,#ff975d 59.1%,#ff6b3d 65.3%,#ff4420 74.2%,#ff2107 87.6%,#ff1400 95.9%,#ff0e00)"></i><i style="left:22px;top:312px;width:534px;height:2px;background:linear-gradient(90deg,#00ffd2,#02ffbf 34.3%,#65ffb9 41.6%,#cdffb2 47.9%,#feffaf 50.6%,#ffc684 54.1%,#ff9560 58.6%,#ff693f 64.8%,#ff4221 73.6%,#ff2008 86.9%,#ff1200 95.7%,#ff0c00)"></i><i style="left:23px;top:314px;width:535px;height:2px;background:linear-gradient(90deg,#00ffd5,#02ffc4 33.8%,#65ffbe 41.1%,#cbffb8 47.3%,#fffdb3 50.1%,#ffc98b 53.3%,#f96 57.6%,#ff6c44 63.6%,#ff4525 72.1%,#ff220b 85%,#f10 95.5%,#ff0b00)"></i><i style="left:23px;top:316px;width:538px;height:2px;background:linear-gradient(90deg,#00ffd8,#01ffc8 33.5%,#63ffc3 40.5%,#c9ffbd 46.7%,#ffffba 49.4%,#ffca90 52.6%,#ff996a 56.9%,#ff6d48 62.6%,#ff4528 71%,#ff230d 83.5%,#ff0f00 95.5%,#ff0900)"></i><i style="left:24px;top:318px;width:540px;height:2px;background:linear-gradient(90deg,#00ffdc,#01ffcd 33%,#63ffc8 40%,#cbffc3 46.1%,#fffdbe 48.9%,#ffc894 52%,#ff976c 56.3%,#ff6b4a 62%,#ff442a 70.4%,#ff220e 83%,#ff0d00 95.6%,#ff0800)"></i><i style="left:24px;top:320px;width:542px;height:2px;background:linear-gradient(90deg,#00ffdf,#02ffd2 32.8%,#63ffcd 39.7%,#c9ffc9 45.6%,#fffec5 48.3%,#ffc899 51.5%,#ff9972 55.5%,#ff6c4d 61.3%,#ff452d 69.4%,#ff2311 81.5%,#ff0c00 95.6%,#ff0600)"></i><i style="left:25px;top:322px;width:544px;height:2px;background:linear-gradient(90deg,#00ffe2,#02ffd6 32.4%,#64ffd2 39.2%,#cbffce 45%,#feffcc 47.6%,#ffc69c 50.9%,#ff9774 55%,#ff6b4f 60.7%,#ff442f 68.8%,#ff2212 80.9%,#ff0a00 95.6%,#ff0500)"></i><i style="left:25px;top:324px;width:547px;height:2px;background:linear-gradient(90deg,#00ffe6,#01ffdb 32%,#64ffd8 38.8%,#ccffd4 44.6%,#fffdd1 47.2%,#ffcaa4 50.1%,#ff997a 54.1%,#ff6d54 59.6%,#ff4533 67.5%,#ff2315 79.3%,#ff0900 95.2%,#ff0300)"></i><i style="left:26px;top:326px;width:548px;height:2px;background:linear-gradient(90deg,#00ffe9,#00ffe0 31.6%,#62ffdd 38.1%,#c7ffda 43.8%,#ffffd9 46.5%,#ffcaaa 49.5%,#ff9a80 53.3%,#ff6f5a 58.6%,#ff4737 66.2%,#ff2418 77.7%,#ff0800 94.9%,#ff0200)"></i><i style="left:26px;top:328px;width:551px;height:2px;background:linear-gradient(90deg,#00ffed,#02ffe5 31.4%,#65ffe3 37.9%,#ccffe0 43.6%,#fffddd 46.1%,#ffc8ae 49%,#ff9781 53%,#ff6b5a 58.4%,#ff4436 66.2%,#ff2118 78%,#ff0600 95.1%,#ff0100)"></i><i style="left:27px;top:330px;width:552px;height:2px;background:linear-gradient(90deg,#00fff0,#02ffea 31%,#65ffe8 37.5%,#ceffe6 43.1%,#fffee5 45.5%,#ffc9b4 48.4%,#ff9987 52.2%,#ff6d5f 57.4%,#ff453b 65%,#ff231b 76.4%,#ff0500 94.7%,#f00)"></i><i style="left:27px;top:332px;width:555px;height:2px;background:linear-gradient(90deg,#00fff4,#01fff0 30.6%,#63ffee 36.9%,#c8ffed 42.3%,#feffec 44.9%,#ffc7b7 47.9%,#ff978a 51.7%,#ff6b61 56.9%,#ff443c 64.5%,#ff221c 75.9%,#ff0400 94.1%,#f00)"></i><i style="left:28px;top:334px;width:557px;height:2px;background:linear-gradient(90deg,#00fff7,#00fff5 30.2%,#63fff4 36.4%,#c9fff3 41.8%,#fffef2 44.3%,#ffc7bd 47.2%,#ff978f 51%,#ff6b65 56.2%,#ff443f 63.6%,#ff221f 74.7%,#ff0402 92.6%,#f00)"></i><i style="left:28px;top:336px;width:559px;height:2px;background:linear-gradient(90deg,#00fffb,#02fffb 30.1%,#63fffa 36.1%,#cbfffa 41.5%,#fffffa 43.8%,#ffc8c4 46.7%,#ff9794 50.4%,#ff6b68 55.6%,#ff4442 63%,#ff2120 74.1%,#ff0403 91.8%,#f00)"></i><i style="left:29px;top:338px;width:561px;height:2px;background:linear-gradient(90deg,#0ff,#02feff 29.6%,#63fdff 35.7%,#cbfdff 41%,#fffdff 43.3%,#ffc9cb 46%,#ff999a 49.6%,#ff6d6e 54.5%,#ff4547 61.7%,#ff2324 72.4%,#ff0506 89.5%,#f00 98.2%,#f00)"></i><i style="left:29px;top:340px;width:564px;height:2px;background:linear-gradient(90deg,#00fbff,#01f8ff 29.3%,#64f7ff 35.5%,#cbf6ff 40.8%,#fff6ff 43.1%,#ffc1c8 45.9%,#ff9198 49.6%,#ff666b 54.8%,#ff4044 62.1%,#ff1f22 73%,#ff0205 90.8%,#f00 99.8%,#f00)"></i><i style="left:30px;top:342px;width:565px;height:2px;background:linear-gradient(90deg,#00f7ff,#00f3ff 28.8%,#62f1ff 35%,#c8f0ff 40.4%,#feefff 42.8%,#ffb9c7 45.8%,#ff8c97 49.6%,#ff626b 54.7%,#ff3d44 62.1%,#ff1c22 73.3%,#ff0004 91.2%,#f00)"></i><i style="left:31px;top:344px;width:567px;height:2px;background:linear-gradient(90deg,#00f3ff,#02edff 28.6%,#63ebff 34.7%,#cbe9ff 40.2%,#ffe6fc 42.7%,#ffb4c7 45.5%,#ff8898 49.2%,#ff5f6c 54.3%,#ff3b45 61.7%,#ff1b23 72.8%,#ff0005 90.5%,#f00 99.6%,#f00)"></i><i style="left:31px;top:346px;width:570px;height:2px;background:linear-gradient(90deg,#00f0ff,#01e8ff 28.2%,#64e6ff 34.6%,#cce3ff 40%,#ffe0fd 42.5%,#ffb0c8 45.3%,#ff8499 48.9%,#ff5d6d 54%,#ff3946 61.4%,#ff1923 72.5%,#ff0007 89.5%,#f00 98.9%,#f00)"></i><i style="left:32px;top:348px;width:571px;height:2px;background:linear-gradient(90deg,#00ecff,#01e3ff 27.8%,#62e0ff 34.2%,#c8ddff 39.6%,#ffdafd 42.2%,#ffabc9 45%,#ff7f98 48.9%,#ff586c 54.1%,#ff3545 61.6%,#ff1622 73%,#ff0008 88.8%,#f00 98.9%,#f00)"></i><i style="left:32px;top:350px;width:574px;height:2px;background:linear-gradient(90deg,#00e8ff,#02deff 27.7%,#66daff 34.1%,#cfd6ff 39.7%,#ffd4fe 42%,#ffa6ca 44.8%,#ff7c99 48.6%,#ff556d 53.8%,#ff3346 61.3%,#ff1523 72.6%,#ff0009 87.8%,#f00 98.8%,#f00)"></i><i style="left:33px;top:352px;width:576px;height:2px;background:linear-gradient(90deg,#00e5ff,#02d9ff 27.3%,#64d5ff 33.7%,#ccd1ff 39.2%,#ffcefe 41.7%,#ffa2cb 44.4%,#ff789a 48.3%,#ff536e 53.5%,#ff3146 60.9%,#ff1424 72.2%,#ff000b 86.6%,#f00 98.6%,#f00)"></i><i style="left:33px;top:354px;width:578px;height:2px;background:linear-gradient(90deg,#00e1ff,#01d4ff 27%,#62d0ff 33.4%,#c8cbff 38.9%,#ffc8ff 41.5%,#ff9bc9 44.5%,#ff7399 48.3%,#ff4e6c 53.6%,#ff2e45 61.2%,#ff1123 72.7%,#ff000c 85.8%,#f00 98.6%,#f00)"></i><i style="left:34px;top:356px;width:580px;height:2px;background:linear-gradient(90deg,#0df,#00d0ff 26.6%,#63cbff 33.1%,#ccc5ff 38.8%,#ffc2ff 41.2%,#ff97c9 44.1%,#ff709a 47.9%,#ff4c6d 53.3%,#ff2c46 60.9%,#ff1024 72.2%,#ff000e 84.5%,#f00 98.6%,#f00)"></i><i style="left:34px;top:358px;width:582px;height:2px;background:linear-gradient(90deg,#00daff,#02cbff 26.5%,#64c5ff 33%,#ccbfff 38.7%,#febdff 41.1%,#ff90c8 44.2%,#ff6a97 48.1%,#ff476b 53.6%,#ff2744 61.5%,#ff0c21 73.4%,#ff000f 83.7%,#f00 98.8%,#f00)"></i><i style="left:35px;top:360px;width:584px;height:2px;background:linear-gradient(90deg,#00d6ff,#01c6ff 26%,#65c0ff 32.7%,#ccbaff 38.4%,#ffb5fd 40.9%,#ff8cc8 43.8%,#ff6798 47.8%,#ff446c 53.3%,#ff2644 61.1%,#ff0b22 72.9%,#f01 82.4%,#f00 98.6%,#f00)"></i><i style="left:35px;top:362px;width:587px;height:2px;background:linear-gradient(90deg,#00d3ff,#01c2ff 25.7%,#64bbff 32.4%,#ccb5ff 38.2%,#ffb0fd 40.7%,#ff88c9 43.6%,#ff6399 47.5%,#ff426d 53%,#ff2445 60.8%,#ff0a23 72.6%,#ff0013 81.3%,#f00 98.5%,#f00)"></i><i style="left:36px;top:364px;width:588px;height:2px;background:linear-gradient(90deg,#00cfff,#02beff 25.5%,#65b7ff 32.1%,#ccafff 37.9%,#ffabfd 40.5%,#ff82c7 43.5%,#ff5e96 47.6%,#ff3d6a 53.2%,#ff2043 61.2%,#ff0721 73.3%,#ff0014 80.6%,#f00 98.5%,#f00)"></i><i style="left:37px;top:366px;width:590px;height:2px;background:linear-gradient(90deg,#0cf,#02b9ff 25.1%,#66b2ff 31.9%,#caf 37.6%,#ffa5fe 40.2%,#ff7ec8 43.2%,#ff5b97 47.3%,#ff3b6b 52.9%,#ff1e44 60.8%,#ff0622 72.9%,#ff0015 80%,#f00 98.5%,#f00)"></i><i style="left:37px;top:368px;width:593px;height:2px;background:linear-gradient(90deg,#00c9ff,#01b5ff 24.8%,#64adff 31.5%,#cca5ff 37.4%,#ffa0fe 40%,#ff7ac9 43%,#ff5898 47%,#ff396c 52.6%,#ff1d45 60.5%,#ff0423 72.5%,#ff0015 79.6%,#f00 98.5%,#f00)"></i><i style="left:38px;top:370px;width:594px;height:2px;background:linear-gradient(90deg,#00c5ff,#01b1ff 24.4%,#65a9ff 31.3%,#cca0ff 37.2%,#ff9cff 39.7%,#ff77ca 42.8%,#f59 46.8%,#ff366d 52.4%,#ff1b46 60.3%,#ff0323 72.2%,#f01 82.7%,#f00 99.3%,#f00)"></i><i style="left:38px;top:372px;width:597px;height:2px;background:linear-gradient(90deg,#00c2ff,#02adff 24.3%,#66a4ff 31.2%,#cc9bff 37%,#ff97ff 39.5%,#ff71c8 42.7%,#ff5198 46.7%,#ff336c 52.4%,#ff1845 60.5%,#ff0122 72.7%,#ff0005 92.3%,#f00)"></i><i style="left:39px;top:374px;width:599px;height:2px;background:linear-gradient(90deg,#00bfff,#02a9ff 23.9%,#64a0ff 30.7%,#cc96ff 36.7%,#fe92ff 39.2%,#ff6cc6 42.6%,#ff4c96 46.7%,#ff2e6a 52.6%,#ff1543 60.9%,#ff0021 73.1%,#ff0004 93.2%,#f00)"></i><i style="left:40px;top:376px;width:600px;height:2px;background:linear-gradient(90deg,#0bf,#01a5ff 23.5%,#659cff 30.5%,#cc92ff 36.5%,#ff8bfd 39.2%,#ff68c7 42.3%,#ff4997 46.5%,#ff2c6b 52.3%,#ff1343 60.7%,#ff0023 72.2%,#ff0006 91.7%,#f00)"></i><i style="left:40px;top:378px;width:600px;height:2px;background:linear-gradient(90deg,#00b8ff,#00a1ff 23.3%,#6398ff 30.3%,#c98dff 36.3%,#ff87fd 39.2%,#ff65c8 42.3%,#ff4698 46.5%,#ff2a6b 52.3%,#ff1244 60.7%,#ff0026 71.5%,#ff0008 90.5%,#f00)"></i><i style="left:41px;top:380px;width:597px;height:2px;background:linear-gradient(90deg,#00b5ff,#029eff 23.3%,#6493ff 30.3%,#cd88ff 36.5%,#ff82fe 39.2%,#ff61c8 42.4%,#ff4498 46.6%,#ff286c 52.4%,#ff1045 60.8%,#ff0028 71%,#ff0009 89.6%,#f00)"></i><i style="left:41px;top:382px;width:591px;height:2px;background:linear-gradient(90deg,#00b2ff,#019aff 23.4%,#658fff 30.6%,#cd84ff 36.9%,#ff7efe 39.6%,#ff5ec9 42.8%,#ff4199 47%,#ff266d 53%,#ff0e46 61.4%,#ff002a 71.1%,#ff000b 89.5%,#f00)"></i><i style="left:42px;top:384px;width:584px;height:2px;background:linear-gradient(90deg,#00afff,#0196ff 23.3%,#638bff 30.7%,#ca80ff 37%,#ff79fe 39.9%,#ff5aca 43.2%,#ff3d98 47.6%,#ff246d 53.6%,#ff0c45 62.3%,#ff002c 71.1%,#ff000d 89.2%,#ff0002)"></i><i style="left:43px;top:386px;width:578px;height:2px;background:linear-gradient(90deg,#00acff,#0293ff 23.4%,#6787ff 31%,#d07bff 37.5%,#ff75ff 40.1%,#ff57ca 43.4%,#ff3b99 47.9%,#ff216d 54.2%,#ff0a45 63%,#ff002f 70.8%,#ff0010 88.6%,#ff0003)"></i><i style="left:43px;top:388px;width:572px;height:2px;background:linear-gradient(90deg,#00a9ff,#028fff 23.4%,#6583ff 31.1%,#cd77ff 37.8%,#ff71ff 40.6%,#ff52c9 44.1%,#ff3798 48.6%,#ff1f6d 54.9%,#ff0845 64%,#ff0031 71%,#f01 88.6%,#ff0005)"></i><i style="left:44px;top:390px;width:565px;height:2px;background:linear-gradient(90deg,#00a6ff,#018cff 23.4%,#6380ff 31.2%,#ca73ff 37.9%,#ff6bfc 41.1%,#ff4ec7 44.6%,#ff3396 49.4%,#ff1b6a 55.9%,#ff0643 65.3%,#ff0032 71.5%,#ff0012 89.2%,#ff0006)"></i><i style="left:45px;top:392px;width:559px;height:2px;background:linear-gradient(90deg,#00a2ff,#0189ff 23.3%,#647cff 31.3%,#cd6fff 38.3%,#ff67fd 41.3%,#ff4bc8 44.9%,#ff3197 49.7%,#ff196b 56.4%,#ff0444 65.8%,#ff0032 72.5%,#ff0012 90.5%,#ff0007)"></i><i style="left:45px;top:394px;width:553px;height:2px;background:linear-gradient(90deg,#00a0ff,#0285ff 23.5%,#6578ff 31.6%,#cd6bff 38.7%,#ff63fd 41.8%,#ff48c9 45.4%,#ff2e98 50.3%,#ff176c 57%,#ff0345 66.5%,#ff0023 81%,#ff0009)"></i><i style="left:46px;top:396px;width:546px;height:2px;background:linear-gradient(90deg,#009cff,#0282ff 23.4%,#6375ff 31.7%,#ca67ff 38.8%,#ff5ffe 42.1%,#ff44c9 45.8%,#ff2c99 50.7%,#ff156d 57.5%,#ff0146 67.2%,#ff0023 81.9%,#ff000b)"></i><i style="left:47px;top:398px;width:540px;height:2px;background:linear-gradient(90deg,#09f,#017fff 23.3%,#6471ff 31.9%,#cd63ff 39.3%,#ff5bfe 42.4%,#ff41ca 46.1%,#ff2999 51.1%,#ff146e 58%,#ff0046 67.8%,#ff0024 82.6%,#ff000c)"></i><i style="left:47px;top:400px;width:534px;height:2px;background:linear-gradient(90deg,#0097ff,#027bff 23.6%,#656dff 32.2%,#cd5fff 39.7%,#ff58fe 42.9%,#ff3dc8 46.8%,#ff2597 52.1%,#ff106c 59.2%,#ff0045 69.1%,#ff0023 84.3%,#ff000e)"></i><i style="left:48px;top:402px;width:527px;height:2px;background:linear-gradient(90deg,#0094ff,#0278ff 23.5%,#666aff 32.4%,#cd5bff 40%,#ff54ff 43.3%,#ff3ac9 47.2%,#ff2398 52.6%,#ff0f6c 59.8%,#ff0049 68.9%,#ff0026 83.9%,#ff0010)"></i><i style="left:49px;top:404px;width:521px;height:2px;background:linear-gradient(90deg,#0091ff,#0175ff 23.4%,#6467ff 32.4%,#cd57ff 40.3%,#ff50ff 43.6%,#ff37ca 47.6%,#ff2199 53%,#ff0c6c 60.5%,#ff004c 68.7%,#ff0029 83.5%,#f01)"></i><i style="left:49px;top:406px;width:515px;height:2px;background:linear-gradient(90deg,#008eff,#0172ff 23.5%,#6364ff 32.6%,#ca54ff 40.6%,#ff4bfd 44.3%,#ff34c8 48.3%,#ff1e98 53.8%,#ff0a6c 61.4%,#ff004f 68.7%,#ff002b 83.3%,#ff0013)"></i><i style="left:50px;top:408px;width:508px;height:2px;background:linear-gradient(90deg,#008bff,#026fff 23.6%,#6660ff 33.1%,#cd50ff 41.1%,#ff48fd 44.7%,#ff31c9 48.8%,#ff1b97 54.5%,#ff086b 62.4%,#ff0053 68.7%,#ff002e 83.1%,#ff0015)"></i><i style="left:51px;top:410px;width:502px;height:2px;background:linear-gradient(90deg,#08f,#026cff 23.5%,#645dff 33.1%,#cd4dff 41.4%,#ff44fd 45%,#ff2dc7 49.4%,#ff1897 55.2%,#ff066b 63.1%,#ff0054 69.1%,#ff0030 83.5%,#ff0017)"></i><i style="left:51px;top:412px;width:496px;height:2px;background:linear-gradient(90deg,#0086ff,#016aff 23.6%,#655aff 33.5%,#cd49ff 41.9%,#ff41fe 45.6%,#ff2ac8 50%,#ff1697 55.8%,#ff046c 63.9%,#ff0054 70.2%,#ff0030 84.9%,#ff0019)"></i><i style="left:52px;top:414px;width:489px;height:2px;background:linear-gradient(90deg,#0083ff,#0367ff 23.7%,#6656ff 33.7%,#cd46ff 42.3%,#ff3dfe 46%,#ff28c8 50.5%,#ff1498 56.4%,#ff026c 64.6%,#ff0045 76.5%,#f02 94.3%,#ff001b)"></i><i style="left:53px;top:416px;width:483px;height:2px;background:linear-gradient(90deg,#0080ff,#0264ff 23.6%,#6454ff 33.7%,#cd42ff 42.7%,#ff3afe 46.4%,#ff25c9 50.9%,#ff1299 56.9%,#ff016d 65.2%,#ff0046 77.2%,#ff0023 95.2%,#ff001d)"></i><i style="left:53px;top:418px;width:477px;height:2px;background:linear-gradient(90deg,#007dff,#0261ff 23.7%,#6550ff 34.2%,#cd3fff 43.2%,#ff36ff 47%,#ff22ca 51.6%,#ff0f98 57.9%,#ff006c 66.5%,#ff0045 78.8%,#f02 97.3%,#ff001f)"></i><i style="left:54px;top:420px;width:470px;height:2px;background:linear-gradient(90deg,#007bff,#015fff 23.6%,#644eff 34.3%,#cb3cff 43.4%,#f3f 47.4%,#ff1fc8 52.3%,#ff0d98 58.7%,#ff006f 66.8%,#ff0047 79.1%,#ff0024 97.7%,#ff0021)"></i><i style="left:55px;top:422px;width:464px;height:2px;background:linear-gradient(90deg,#0078ff,#025cff 23.7%,#654bff 34.5%,#cd38ff 44%,#ff2ffd 48.1%,#ff1cc7 53%,#ff0a97 59.5%,#ff0073 66.6%,#ff004b 78.7%,#ff0027 96.8%,#ff0023)"></i><i style="left:56px;top:424px;width:457px;height:2px;background:linear-gradient(90deg,#0075ff,#0259ff 23.6%,#6548ff 34.8%,#cd35ff 44.4%,#ff2cfd 48.6%,#ff19c7 53.6%,#ff0896 60.4%,#f07 66.5%,#ff004f 78.3%,#ff002b 95.8%,#ff0025)"></i><i style="left:56px;top:426px;width:451px;height:2px;background:linear-gradient(90deg,#0073ff,#0157ff 23.7%,#6445ff 35%,#cb33ff 44.8%,#ff29fd 49.2%,#ff16c8 54.3%,#ff0697 61.2%,#ff007b 66.7%,#ff0052 78.5%,#ff002e 95.8%,#ff0028)"></i><i style="left:57px;top:428px;width:445px;height:2px;background:linear-gradient(90deg,#0070ff,#0154ff 23.6%,#6542ff 35.3%,#cd2fff 45.4%,#ff26fe 49.7%,#ff14c9 54.8%,#ff0498 61.8%,#ff0079 68.1%,#ff0050 80.2%,#ff002d 98.2%,#ff002a)"></i><i style="left:58px;top:430px;width:438px;height:2px;background:linear-gradient(90deg,#006dff,#0251ff 23.7%,#653fff 35.6%,#ce2cff 45.9%,#ff23fe 50.2%,#ff12c9 55.5%,#ff0298 62.6%,#ff006c 72.4%,#ff0045 86.3%,#ff002c)"></i><i style="left:59px;top:432px;width:431px;height:2px;background:linear-gradient(90deg,#006bff,#024fff 23.7%,#643dff 35.7%,#cb29ff 46.2%,#ff20fe 50.8%,#ff0fca 56.1%,#f09 63.3%,#ff006d 73.3%,#ff0046 87.5%,#ff002f)"></i><i style="left:60px;top:434px;width:425px;height:2px;background:linear-gradient(90deg,#0068ff,#014dff 23.5%,#653aff 36%,#ce26ff 46.8%,#ff1dff 51.3%,#ff0cc8 56.9%,#ff0098 64.2%,#ff006d 74.4%,#ff0045 88.9%,#ff0031)"></i><i style="left:60px;top:436px;width:419px;height:2px;background:linear-gradient(90deg,#06f,#024aff 23.9%,#6537ff 36.5%,#ce23ff 47.5%,#ff19fc 52.3%,#ff09c7 58%,#ff009e 64.2%,#ff0071 74.2%,#ff0049 88.5%,#ff0034)"></i><i style="left:61px;top:438px;width:413px;height:2px;background:linear-gradient(90deg,#0063ff,#0248ff 23.7%,#6634ff 36.8%,#ce20ff 47.9%,#ff16fd 52.8%,#ff07c8 58.6%,#ff00a3 64.2%,#ff0076 74.1%,#ff004d 88.1%,#ff0037)"></i><i style="left:62px;top:440px;width:406px;height:2px;background:linear-gradient(90deg,#0061ff,#0146ff 23.6%,#6532ff 36.9%,#ce1dff 48.5%,#ff13fd 53.4%,#ff05c8 59.4%,#ff00a6 64.5%,#ff0079 74.4%,#ff0050 88.4%,#ff003a)"></i><i style="left:63px;top:442px;width:399px;height:2px;background:linear-gradient(90deg,#005eff,#0143ff 23.6%,#6330ff 37.1%,#cb1bff 48.9%,#ff10fd 54.1%,#ff02c9 60.2%,#f09 68.2%,#ff006c 79.4%,#ff0045 95.5%,#ff003d)"></i><i style="left:64px;top:444px;width:393px;height:2px;background:linear-gradient(90deg,#005bff,#0241ff 23.7%,#662dff 37.7%,#ce18ff 49.6%,#ff0efe 54.7%,#ff00c9 60.8%,#ff0098 69.2%,#ff006c 80.7%,#ff0045 97.2%,#ff0040)"></i><i style="left:65px;top:446px;width:386px;height:2px;background:linear-gradient(90deg,#0059ff,#023fff 23.6%,#652bff 37.8%,#ce15ff 50.3%,#ff0bfe 55.4%,#ff00c8 61.9%,#ff0097 70.5%,#ff006b 82.4%,#f04 99.5%,#ff0043)"></i><i style="left:66px;top:448px;width:379px;height:2px;background:linear-gradient(90deg,#0056ff,#013dff 23.5%,#6428ff 38%,#cb13ff 50.7%,#ff08fe 56.2%,#ff00d0 61.7%,#ff009e 70.2%,#ff0071 81.8%,#ff004a 98.2%,#ff0046)"></i><i style="left:66px;top:450px;width:374px;height:2px;background:linear-gradient(90deg,#0054ff,#023aff 23.8%,#6625ff 38.8%,#ce10ff 51.6%,#ff05ff 57%,#ff00d6 61.8%,#ff00a4 70.1%,#f07 81.3%,#ff004e 97.3%,#ff0049)"></i><i style="left:67px;top:452px;width:367px;height:2px;background:linear-gradient(90deg,#0052ff,#0238ff 23.7%,#6523ff 39%,#ce0dff 52.3%,#ff02fc 58%,#ff00c8 64.9%,#ff0097 74.1%,#ff006b 86.9%,#ff004d)"></i><i style="left:68px;top:454px;width:360px;height:2px;background:linear-gradient(90deg,#004fff,#0236ff 23.6%,#6621ff 39.4%,#ce0bff 53.1%,#ff00fd 58.9%,#ff00c8 65.8%,#ff0098 75.3%,#ff006b 88.3%,#ff0051)"></i><i style="left:69px;top:456px;width:354px;height:2px;background:linear-gradient(90deg,#004dff,#0134ff 23.4%,#641fff 39.5%,#cc09ff 53.4%,#ff00fd 59.6%,#ff00c7 66.9%,#ff0097 76.6%,#ff006b 89.8%,#ff0054)"></i><i style="left:70px;top:458px;width:347px;height:2px;background:linear-gradient(90deg,#004aff,#0232ff 23.6%,#651cff 40.1%,#ce06ff 54.5%,#fe00ff 60.2%,#ff00c6 68.3%,#ff0095 78.4%,#ff006a 92.2%,#ff0058)"></i><i style="left:71px;top:460px;width:340px;height:2px;background:linear-gradient(90deg,#0048ff,#0230ff 23.5%,#661aff 40.6%,#ce03ff 55.3%,#ff00fe 61.5%,#ff00c8 69.1%,#ff0097 79.4%,#ff006b 93.5%,#ff005c)"></i><i style="left:72px;top:462px;width:334px;height:2px;background:linear-gradient(90deg,#0046ff,#012eff 23.4%,#6418ff 40.7%,#cc01ff 55.7%,#ff00fe 62.3%,#ff00c9 70.1%,#ff0098 80.5%,#ff006c 94.9%,#ff0060)"></i><i style="left:73px;top:464px;width:327px;height:2px;background:linear-gradient(90deg,#0043ff,#032cff 23.5%,#6516ff 41.3%,#ce00ff 56.9%,#ff00fe 63.3%,#ff00c9 71.3%,#ff0098 82%,#ff006c 96.6%,#ff0065)"></i><i style="left:74px;top:466px;width:320px;height:2px;background:linear-gradient(90deg,#0041ff,#022aff 23.4%,#6613ff 41.9%,#ca00ff 57.2%,#ff00fc 64.7%,#ff00c6 73.1%,#ff0095 84.4%,#ff006a 99.7%,#ff0069)"></i><i style="left:75px;top:468px;width:314px;height:2px;background:linear-gradient(90deg,#003fff,#0228ff 23.2%,#6412ff 42%,#bf00ff 56.4%,#ff00fd 65.6%,#ff00c7 74.2%,#ff0096 85.7%,#ff006d)"></i><i style="left:76px;top:470px;width:307px;height:2px;background:linear-gradient(90deg,#003cff,#0126ff 23.1%,#650fff 42.7%,#b400ff 55.7%,#ff00fd 66.8%,#ff00c7 75.6%,#ff0097 87.3%,#ff0073)"></i><i style="left:77px;top:472px;width:300px;height:2px;background:linear-gradient(90deg,#003aff,#0224ff 23.3%,#660dff 43.3%,#ac00ff 55.3%,#ff00fd 68%,#ff00c8 77%,#ff0097 89%,#ff0078)"></i><i style="left:78px;top:474px;width:294px;height:2px;background:linear-gradient(90deg,#0038ff,#0222ff 23.1%,#640bff 43.5%,#a400ff 54.8%,#ff00fe 69%,#ff00c8 78.2%,#ff0098 90.5%,#ff007d)"></i><i style="left:79px;top:476px;width:287px;height:2px;background:linear-gradient(90deg,#0035ff,#0221ff 23%,#6509ff 44.3%,#9a00ff 54%,#ff00fe 70.4%,#ff00c9 79.8%,#ff0098 92.3%,#ff0083)"></i><i style="left:80px;top:478px;width:280px;height:2px;background:linear-gradient(90deg,#03f,#011fff 22.9%,#6407ff 44.6%,#9300ff 53.6%,#ff00fe 71.8%,#ff00c9 81.4%,#ff0098 94.6%,#ff0089)"></i><i style="left:81px;top:480px;width:274px;height:2px;background:linear-gradient(90deg,#0031ff,#021dff 23%,#6605ff 45.6%,#9100ff 54%,#fb00ff 72.3%,#ff00f8 74.1%,#ff00c3 84.3%,#ff0093 98.2%,#ff008e)"></i><i style="left:82px;top:482px;width:267px;height:2px;background:linear-gradient(90deg,#002fff,#021bff 22.8%,#6503ff 46.1%,#a700ff 59.2%,#ff00fc 74.9%,#ff00c7 85.4%,#ff0097 99.3%,#ff0095)"></i><i style="left:83px;top:484px;width:260px;height:2px;background:linear-gradient(90deg,#002dff,#011aff 22.7%,#6402ff 46.5%,#c0f 67.3%,#ff00fd 76.5%,#ff00c7 87.3%,#ff009c)"></i><i style="left:84px;top:486px;width:254px;height:2px;background:linear-gradient(90deg,#002aff,#0218ff 22.8%,#60f 47.6%,#ce00ff 68.9%,#ff00fd 78%,#ff00c8 89%,#ff00a2)"></i><i style="left:85px;top:488px;width:247px;height:2px;background:linear-gradient(90deg,#0028ff,#0216ff 22.7%,#6500ff 48.2%,#ce00ff 70.4%,#ff00fd 79.8%,#ff00c8 91.1%,#f0a)"></i><i style="left:86px;top:490px;width:240px;height:2px;background:linear-gradient(90deg,#0026ff,#0214ff 22.5%,#5f00ff 47.5%,#c600ff 70.4%,#ff00fe 81.7%,#ff00c7 93.8%,#ff00b2)"></i><i style="left:87px;top:492px;width:234px;height:2px;background:linear-gradient(90deg,#0024ff,#0113ff 22.2%,#5900ff 46.6%,#c000ff 70.5%,#ff00fe 83.3%,#ff00c8 95.7%,#ff00b9)"></i><i style="left:88px;top:494px;width:227px;height:2px;background:linear-gradient(90deg,#02f,#0211ff 22.5%,#5100ff 45.4%,#b800ff 70.5%,#ff00fe 85.5%,#ff00c8 98.2%,#ff00c2)"></i><i style="left:89px;top:496px;width:220px;height:2px;background:linear-gradient(90deg,#0020ff,#020fff 22.3%,#4a00ff 44.1%,#b000ff 70.5%,#ff00fe 87.7%,#f0c)"></i><i style="left:90px;top:498px;width:214px;height:2px;background:linear-gradient(90deg,#001dff,#020eff 22%,#40f 43%,#ab00ff 70.6%,#ff00fc 90.2%,#ff00d4)"></i><i style="left:92px;top:500px;width:206px;height:2px;background:linear-gradient(90deg,#001bff,#030cff 21.8%,#3f00ff 41.7%,#a500ff 70.9%,#ff00fd 92.7%,#ff00df)"></i><i style="left:93px;top:502px;width:200px;height:2px;background:linear-gradient(90deg,#0019ff,#020bff 21.5%,#3800ff 40%,#9e00ff 70.5%,#ff00fd 95%,#ff00e9)"></i><i style="left:94px;top:504px;width:193px;height:2px;background:linear-gradient(90deg,#0017ff,#0209ff 21.2%,#3200ff 38.9%,#90f 71%,#ff00fd 97.9%,#ff00f5)"></i><i style="left:95px;top:506px;width:186px;height:2px;background:linear-gradient(90deg,#0015ff,#0108ff 21%,#2d00ff 37.6%,#9200ff 71%,#fc00ff)"></i><i style="left:97px;top:508px;width:179px;height:2px;background:linear-gradient(90deg,#0012ff,#0206ff 20.7%,#2a00ff 36.3%,#8f00ff 71.5%,#f100ff)"></i><i style="left:98px;top:510px;width:172px;height:2px;background:linear-gradient(90deg,#0010ff,#0205ff 20.3%,#2900ff 36.6%,#8d00ff 73.3%,#e500ff)"></i><i style="left:99px;top:512px;width:165px;height:2px;background:linear-gradient(90deg,#000eff,#0203ff 20%,#3e00ff 46.1%,#a500ff 83.6%,#d800ff)"></i><i style="left:101px;top:514px;width:158px;height:2px;background:linear-gradient(90deg,#000cff,#0301ff 19.6%,#60f 62.7%,#cf00ff)"></i><i style="left:102px;top:516px;width:151px;height:2px;background:linear-gradient(90deg,#000aff,#0200ff 19.2%,#6500ff 64.2%,#c300ff)"></i><i style="left:103px;top:518px;width:144px;height:2px;background:linear-gradient(90deg,#0008ff,#0200ff 18.8%,#6500ff 66.7%,#b800ff)"></i><i style="left:105px;top:520px;width:137px;height:2px;background:linear-gradient(90deg,#0006ff,#0300ff 18.2%,#60f 68.6%,#af00ff)"></i><i style="left:106px;top:522px;width:130px;height:2px;background:linear-gradient(90deg,#0004ff,#0200ff 17.7%,#60f 71.5%,#a400ff)"></i><i style="left:108px;top:524px;width:122px;height:2px;background:linear-gradient(90deg,#0001ff,#0200ff 16.4%,#6500ff 73.8%,#9a00ff)"></i><i style="left:110px;top:526px;width:115px;height:2px;background:linear-gradient(90deg,#00f,#0300ff 15.7%,#60f 76.5%,#9200ff)"></i><i style="left:111px;top:528px;width:108px;height:2px;background:linear-gradient(90deg,#00f,#0300ff 14.8%,#6700ff 80.6%,#80f)"></i><i style="left:113px;top:530px;width:100px;height:2px;background:linear-gradient(90deg,#00f,#0200ff 13%,#6500ff 84%,#7f00ff)"></i><i style="left:115px;top:532px;width:93px;height:2px;background:linear-gradient(90deg,#00f,#0300ff 11.8%,#60f 88.2%,#70f)"></i><i style="left:117px;top:534px;width:85px;height:2px;background:linear-gradient(90deg,#00f,#0400ff 10.6%,#6800ff 95.3%,#6e00ff)"></i><i style="left:120px;top:536px;width:76px;height:2px;background:linear-gradient(90deg,#00f,#30f 53.9%,#60f)"></i><i style="left:122px;top:538px;width:69px;height:2px;background:linear-gradient(90deg,#0100ff,#5f00ff)"></i><i style="left:124px;top:540px;width:61px;height:2px;background:linear-gradient(90deg,#0400ff,#5600ff)"></i><i style="left:127px;top:542px;width:52px;height:2px;background:linear-gradient(90deg,#0900ff,#4e00ff)"></i><i style="left:130px;top:544px;width:44px;height:2px;background:linear-gradient(90deg,#0d00ff,#4800ff)"></i><i style="left:133px;top:546px;width:35px;height:2px;background:linear-gradient(90deg,#1200ff,#4000ff)"></i><i style="left:136px;top:548px;width:26px;height:2px;background:linear-gradient(90deg,#1700ff,#3900ff)"></i><i style="left:139px;top:550px;width:18px;height:2px;background:linear-gradient(90deg,#1b00ff,#30f)"></i><i style="left:142px;top:552px;width:9px;height:2px;background:linear-gradient(90deg,#2000ff,#2b00ff)"></i></div><svg style="position:absolute;left:0;top:0" width="1920" height="1044" viewBox="0 0 1920 1044"><path d="M1309 672.92L1307.15 671.76L1304.96 670.23L1302.06 668.29L1300.21 667.07L1298.1 665.69L1295.79 664.15L1293.2 662.36L1290.3 660.25L1287.08 657.71L1284.8 655.8L1282.38 653.66L1279.67 650.95L1277.88 649.02L1276 646.92L1274.01 644.6L1271.91 642L1269.7 639.07L1267.78 636.41L1265.79 633.6L1263.73 630.58L1261.58 627.31L1259.34 623.72L1257 619.77L1254.56 615.49L1252.04 610.95L1249.42 606.1L1246.7 600.88L1243.88 595.26L1240.95 589.18L1237.87 582.67L1234.64 575.8L1231.3 568.52L1227.91 560.79L1224.5 552.58L1221.11 543.84L1217.73 534.56L1214.3 524.76L1210.85 514.47L1207.41 503.72L1204.01 492.54L1200.66 480.95L1197.32 468.83L1193.95 456.14L1190.61 443.01L1187.37 429.59L1184.29 416.02L1181.43 402.44L1178.75 388.71L1176.17 374.66L1173.75 360.47L1171.55 346.29L1169.61 332.28L1168 318.61L1166.67 305.15L1165.56 291.75L1164.72 278.53L1164.2 265.6L1164.02 253.05L1164.23 241.01L1164.81 229.34L1165.73 217.95L1167 206.95L1168.63 196.46L1170.62 186.6L1172.99 177.49L1175.77 169.04L1178.97 161.16L1182.53 153.91L1186.39 147.34L1190.51 141.51L1194.81 136.49L1199.35 132.34L1204.22 129.03L1209.34 126.45L1214.65 124.5L1220.08 123.09L1225.55 122.12L1231.08 121.73L1236.78 122.04L1242.61 122.89L1248.52 124.13L1254.46 125.61L1260.36 127.17L1266.27 128.9L1272.22 130.95L1278.19 133.23L1284.14 135.67L1290.05 138.18L1295.86 140.69L1301.58 143.21L1307.23 145.82L1312.83 148.5L1318.38 151.24L1323.9 154.04L1329.38 156.89L1334.83 159.79L1340.23 162.74L1345.6 165.75L1350.94 168.82L1356.27 171.93L1361.6 175.1L1366.92 178.31L1372.23 181.58L1377.53 184.9L1382.82 188.27L1388.1 191.67L1393.38 195.1L1398.64 198.57L1403.88 202.09L1409.12 205.63L1414.35 209.22L1419.58 212.82L1424.81 216.45L1430.04 220.1L1435.27 223.79L1440.49 227.49L1445.71 231.22L1450.94 234.97L1456.17 238.74L1461.4 242.52L1466.65 246.33L1471.89 250.15L1477.14 253.99L1482.38 257.84L1487.61 261.69L1492.84 265.55L1498.05 269.43L1503.27 273.31L1508.48 277.21L1513.68 281.1L1518.88 284.98L1524.08 288.87L1529.29 292.76L1534.48 296.64L1539.67 300.53L1544.84 304.41L1549.98 308.27L1555.11 312.13L1560.22 315.99L1565.32 319.84L1570.39 323.68L1575.44 327.5L1580.46 331.3L1585.46 335.08L1590.44 338.85L1595.4 342.61L1600.32 346.34L1605.22 350.04L1610.07 353.72L1614.89 357.37L1619.68 361L1624.44 364.61L1629.16 368.18L1633.83 371.72L1638.44 375.21L1643.02 378.67L1647.56 382.09L1652.05 385.48L1656.49 388.82L1660.86 392.12L1665.15 395.37L1669.38 398.57L1673.55 401.74L1677.66 404.87L1681.7 407.94L1685.64 410.93L1689.49 413.85L1693.23 416.69L1696.87 419.45L1700.43 422.14L1703.91 424.77L1707.31 427.34L1710.66 429.87L1713.95 432.36L1717.17 434.8L1720.33 437.19L1723.4 439.51L1726.39 441.77L1729.28 443.95L1732.62 446.47L1735.84 448.88L1738.92 451.19L1741.89 453.42L1744.74 455.57L1747.48 457.64L1750.1 459.63L1752.6 461.53L1755 463.36L1757.3 465.11L1760.03 467.19L1762.6 469.14L1765.02 470.97L1767.32 472.72L1770.2 474.88L1772.84 476.87L1775.32 478.73L1777.61 480.46L1779.73 482.07L1781.73 483.6L1784.53 485.73L1787.09 487.67L1789.4 489.43L1791.48 491.01L1793.35 492.39L1794.99 493.61L1797.63 495.61L1799.65 497.15L1801.14 498.28L1801.7 498.71ZM1722.44 457.76L1423.75 277.56L1291.98 637.96Z" fill="#000" fill-opacity=".4" fill-rule="evenodd"/><path d="M1300 664.5L1313.6 675L1806.5 500.3" stroke="#5a1030" stroke-opacity=".5" stroke-width="1" fill="none"/><rect x="1427.31" y="449.53" width="15.2" height="15.2" fill="none" stroke="#000" stroke-width="1.9"/><rect x="1504.16" y="425.93" width="15.4" height="15.4" fill="none" stroke="#fff" stroke-width="1.6"/><rect x="1485.89" y="431.27" width="15.4" height="15.4" fill="none" stroke="#fff" stroke-width="1.6"/><rect x="1371.77" y="491.74" width="15.4" height="15.4" fill="none" stroke="#fff" stroke-width="1.6"/><rect x="1450.75" y="383.95" width="15.4" height="15.4" fill="none" stroke="#fff" stroke-width="1.6"/><rect x="1388.03" y="500.48" width="15.4" height="15.4" fill="none" stroke="#fff" stroke-width="1.6"/><rect x="1383.19" y="427.67" width="15.4" height="15.4" fill="none" stroke="#fff" stroke-width="1.6"/><rect x="1602.47" y="397.84" width="15.4" height="15.4" fill="none" stroke="#fff" stroke-width="1.6"/><rect x="1342" y="540.6" width="15.4" height="15.4" fill="none" stroke="#fff" stroke-width="1.6"/><rect x="1557.6" y="460.6" width="15.4" height="15.4" fill="none" stroke="#fff" stroke-width="1.6"/><rect x="1407.3" y="521.1" width="15.4" height="15.4" fill="none" stroke="#fff" stroke-width="1.6"/><rect x="1481.7" y="339.6" width="15.4" height="15.4" fill="none" stroke="#fff" stroke-width="1.6"/><rect x="1568.6" y="375.3" width="15.4" height="15.4" fill="none" stroke="#fff" stroke-width="1.6"/><rect x="1320" y="575.6" width="15.4" height="15.4" fill="none" stroke="#fff" stroke-width="1.6"/><rect x="1419.7" y="341" width="15.4" height="15.4" fill="none" stroke="#fff" stroke-width="1.6"/><rect x="1624.3" y="458" width="15.4" height="15.4" fill="none" stroke="#fff" stroke-width="1.6"/><rect x="1545.3" y="352" width="15.4" height="15.4" fill="none" stroke="#fff" stroke-width="1.6"/><rect x="1480.3" y="504.3" width="15.4" height="15.4" fill="none" stroke="#fff" stroke-width="1.6"/><rect x="1334" y="488.6" width="15.4" height="15.4" fill="none" stroke="#fff" stroke-width="1.6"/><rect x="1714.3" y="448.3" width="15.4" height="15.4" fill="none" stroke="#fff" stroke-width="1.6"/><rect x="1414.8" y="268.2" width="15.4" height="15.4" fill="none" stroke="#fff" stroke-width="1.6"/><rect x="1283" y="628.3" width="15.4" height="15.4" fill="none" stroke="#fff" stroke-width="1.6"/><rect x="1349.8" y="450.1" width="15.4" height="15.4" fill="none" stroke="#fff" stroke-width="1.6"/><rect x="1433.6" y="566.3" width="15.4" height="15.4" fill="none" stroke="#fff" stroke-width="1.6"/><rect x="1520.86" y="331.76" width="15.4" height="15.4" fill="none" stroke="#fff" stroke-width="1.6"/><circle cx="1436.22" cy="449.95" r="5" fill="#ffffff" stroke="#000" stroke-width="1.2"/><circle cx="1436.48" cy="449.02" r="5" fill="#e6e6e6" stroke="#000" stroke-width="1.2"/><circle cx="1436.3" cy="448.82" r="5" fill="#d1d1d1" stroke="#000" stroke-width="1.2"/><circle cx="1436.3" cy="448.75" r="5" fill="#b9b9b9" stroke="#000" stroke-width="1.2"/><circle cx="1436.65" cy="448.15" r="5" fill="#9e9e9e" stroke="#000" stroke-width="1.2"/><circle cx="1379.46" cy="504.21" r="5" fill="#000000" stroke="#000" stroke-width="1.2"/><circle cx="1517.39" cy="426.12" r="5" fill="#735244" stroke="#000" stroke-width="1.2"/><circle cx="1498.5" cy="429.26" r="5" fill="#c29682" stroke="#000" stroke-width="1.2"/><circle cx="1376.3" cy="493" r="5" fill="#627a9d" stroke="#000" stroke-width="1.2"/><circle cx="1460.11" cy="383.14" r="5" fill="#576c43" stroke="#000" stroke-width="1.2"/><circle cx="1393.43" cy="501.94" r="5" fill="#8580b1" stroke="#000" stroke-width="1.2"/><circle cx="1389.22" cy="427.26" r="5" fill="#67bdaa" stroke="#000" stroke-width="1.2"/><circle cx="1617.45" cy="401.9" r="5" fill="#d67e2c" stroke="#000" stroke-width="1.2"/><circle cx="1345" cy="542.8" r="5" fill="#505ba6" stroke="#000" stroke-width="1.2"/><circle cx="1575.8" cy="461.2" r="5" fill="#c15a63" stroke="#000" stroke-width="1.2"/><circle cx="1416.3" cy="521.7" r="5" fill="#5e3c6c" stroke="#000" stroke-width="1.2"/><circle cx="1492.5" cy="342.9" r="5" fill="#9dbc40" stroke="#000" stroke-width="1.2"/><circle cx="1579.5" cy="378.3" r="5" fill="#e0a32e" stroke="#000" stroke-width="1.2"/><circle cx="1321.7" cy="578.7" r="5" fill="#383d96" stroke="#000" stroke-width="1.2"/><circle cx="1429.2" cy="341.4" r="5" fill="#469449" stroke="#000" stroke-width="1.2"/><circle cx="1646" cy="459" r="5" fill="#af363c" stroke="#000" stroke-width="1.2"/><circle cx="1554.4" cy="355.3" r="5" fill="#e7c71f" stroke="#000" stroke-width="1.2"/><circle cx="1495.5" cy="504.2" r="5" fill="#bb5695" stroke="#000" stroke-width="1.2"/><circle cx="1340.5" cy="488.7" r="5" fill="#0885a1" stroke="#000" stroke-width="1.2"/><circle cx="1726.7" cy="453.3" r="5" fill="#ff0000" stroke="#000" stroke-width="1.2"/><circle cx="1424.1" cy="276.3" r="5" fill="#00ff00" stroke="#000" stroke-width="1.2"/><circle cx="1284.3" cy="630" r="5" fill="#0000ff" stroke="#000" stroke-width="1.2"/><circle cx="1356" cy="450" r="5" fill="#00ffff" stroke="#000" stroke-width="1.2"/><circle cx="1444.3" cy="566.3" r="5" fill="#ff00ff" stroke="#000" stroke-width="1.2"/><circle cx="1530.04" cy="338.29" r="5" fill="#ffff00" stroke="#000" stroke-width="1.2"/></svg><div style="left:1639px;top:121px;width:256px;height:216.5px;background:#333"></div><div class="cie" style="left:1642.2px;top:124.2px;width:249.8px;height:210px;overflow:hidden"><i style="left:0px;top:0px;width:250px;height:3px;background:linear-gradient(90deg,#b1ff00,#fffd00 80.8%,#ffea00)"></i><i style="left:0px;top:3px;width:250px;height:3px;background:linear-gradient(90deg,#b2ff00,#fffd00 80%,#ffea00)"></i><i style="left:0px;top:6px;width:250px;height:3px;background:linear-gradient(90deg,#b2ff00,#fffd00 79.2%,#ffe900)"></i><i style="left:0px;top:9px;width:250px;height:3px;background:linear-gradient(90deg,#b3ff00,#fffd00 78.4%,#ffe800)"></i><i style="left:0px;top:12px;width:250px;height:3px;background:linear-gradient(90deg,#b4ff00,#fffd00 77.2%,#ffe700)"></i><i style="left:0px;top:15px;width:250px;height:3px;background:linear-gradient(90deg,#b5ff00,#fffd00 76.4%,#ffe600)"></i><i style="left:0px;top:18px;width:250px;height:3px;background:linear-gradient(90deg,#b5ff00,#fffd00 75.6%,#ffe500)"></i><i style="left:0px;top:21px;width:250px;height:3px;background:linear-gradient(90deg,#b6ff00,#fffd00 74.8%,#ffe500)"></i><i style="left:0px;top:24px;width:250px;height:3px;background:linear-gradient(90deg,#b7ff00,#fffd00 74%,#ffe400)"></i><i style="left:0px;top:27px;width:250px;height:3px;background:linear-gradient(90deg,#b7ff01,#fffd00 73.2%,#ffe300)"></i><i style="left:0px;top:30px;width:250px;height:3px;background:linear-gradient(90deg,#b8ff01,#fffd00 72%,#ffe200)"></i><i style="left:0px;top:33px;width:250px;height:3px;background:linear-gradient(90deg,#b9ff02,#fffd00 71.2%,#ffe100)"></i><i style="left:0px;top:36px;width:250px;height:3px;background:linear-gradient(90deg,#b9ff02,#fffd00 70.4%,#ffe100)"></i><i style="left:0px;top:39px;width:250px;height:3px;background:linear-gradient(90deg,#baff02,#fffd00 69.6%,#ffe000)"></i><i style="left:0px;top:42px;width:250px;height:3px;background:linear-gradient(90deg,#bbff03,#eaff00 47.6%,#fffd00 68.8%,#ffdf00)"></i><i style="left:0px;top:45px;width:250px;height:3px;background:linear-gradient(90deg,#bcff03,#e4ff00 40.8%,#fffd00 68%,#ffde00)"></i><i style="left:0px;top:48px;width:250px;height:3px;background:linear-gradient(90deg,#bcff04,#e2ff00 38%,#fffd00 67.2%,#fd0)"></i><i style="left:0px;top:51px;width:250px;height:3px;background:linear-gradient(90deg,#bdff04,#e2ff00 37.2%,#fffd00 66.4%,#fd0)"></i><i style="left:0px;top:54px;width:250px;height:3px;background:linear-gradient(90deg,#beff04,#e3ff00 37.2%,#fffd00 65.2%,#ffdc00)"></i><i style="left:0px;top:57px;width:250px;height:3px;background:linear-gradient(90deg,#bfff05,#e4ff00 37.6%,#fffd00 64.4%,#ffdb00)"></i><i style="left:0px;top:60px;width:250px;height:3px;background:linear-gradient(90deg,#bfff05,#e6ff00 38.4%,#fffd00 63.6%,#ffda00)"></i><i style="left:0px;top:63px;width:250px;height:3px;background:linear-gradient(90deg,#c0ff06,#e8ff00 39.6%,#fffd00 62.8%,#ffd900)"></i><i style="left:0px;top:66px;width:250px;height:3px;background:linear-gradient(90deg,#c1ff06,#eaff00 40.8%,#fffd00 62%,#ffd900)"></i><i style="left:0px;top:69px;width:250px;height:3px;background:linear-gradient(90deg,#c2ff06,#edff00 42.4%,#fffd00 61.2%,#ffd800)"></i><i style="left:0px;top:72px;width:250px;height:3px;background:linear-gradient(90deg,#c2ff07,#efff00 43.6%,#fffd00 60.4%,#ffd700)"></i><i style="left:0px;top:75px;width:250px;height:3px;background:linear-gradient(90deg,#c3ff07,#f2ff00 45.2%,#fffd00 59.6%,#ffd600)"></i><i style="left:0px;top:78px;width:250px;height:3px;background:linear-gradient(90deg,#c4ff08,#f4ff00 46.4%,#fffd00 58.8%,#ffd600)"></i><i style="left:0px;top:81px;width:250px;height:3px;background:linear-gradient(90deg,#c5ff08,#f7ff00 48%,#fffd00 58%,#ffd500)"></i><i style="left:0px;top:84px;width:250px;height:3px;background:linear-gradient(90deg,#c5ff08,#f9ff00 49.6%,#fffc00 57.6%,#ffd400)"></i><i style="left:0px;top:87px;width:250px;height:3px;background:linear-gradient(90deg,#c6ff09,#fcff00 51.2%,#fff900 59.2%,#ffd300)"></i><i style="left:0px;top:90px;width:250px;height:3px;background:linear-gradient(90deg,#c7ff09,#ff0 52.8%,#ffd200)"></i><i style="left:0px;top:93px;width:250px;height:3px;background:linear-gradient(90deg,#c8ff0a,#fffd00 54%,#ffd200)"></i><i style="left:0px;top:96px;width:250px;height:3px;background:linear-gradient(90deg,#c9ff0a,#fffd00 53.2%,#ffd100)"></i><i style="left:0px;top:99px;width:250px;height:3px;background:linear-gradient(90deg,#c9ff0a,#fffd00 52.4%,#ffd000)"></i><i style="left:0px;top:102px;width:250px;height:3px;background:linear-gradient(90deg,#caff0b,#fffd00 51.6%,#ffcf00)"></i><i style="left:0px;top:105px;width:250px;height:3px;background:linear-gradient(90deg,#cbff0b,#fffd00 50.4%,#ffcf00)"></i><i style="left:0px;top:108px;width:250px;height:3px;background:linear-gradient(90deg,#ccff0c,#fffd01 49.6%,#ffce00)"></i><i style="left:0px;top:111px;width:250px;height:3px;background:linear-gradient(90deg,#cdff0c,#fffd01 48.8%,#ffcd00)"></i><i style="left:0px;top:114px;width:250px;height:3px;background:linear-gradient(90deg,#cdff0d,#fffd02 48%,#ffcd00 99.6%,#fc0)"></i><i style="left:0px;top:117px;width:250px;height:3px;background:linear-gradient(90deg,#ceff0d,#fffd02 47.2%,#ffcd00 98.8%,#fc0)"></i><i style="left:0px;top:120px;width:250px;height:3px;background:linear-gradient(90deg,#cfff0e,#fffd03 46.4%,#ffd800 83.6%,#ffcb00)"></i><i style="left:0px;top:123px;width:250px;height:3px;background:linear-gradient(90deg,#d0ff0e,#fffd04 45.2%,#ffdb00 79.2%,#ffca00)"></i><i style="left:0px;top:126px;width:250px;height:3px;background:linear-gradient(90deg,#d1ff0e,#fffd04 44.4%,#ffdb00 78.4%,#ffc900)"></i><i style="left:0px;top:129px;width:250px;height:3px;background:linear-gradient(90deg,#d1ff0f,#fffd05 43.6%,#ffda00 78.8%,#ffc900)"></i><i style="left:0px;top:132px;width:250px;height:3px;background:linear-gradient(90deg,#d2ff0f,#fffd06 42.8%,#ffd900 79.6%,#ffc800)"></i><i style="left:0px;top:135px;width:250px;height:3px;background:linear-gradient(90deg,#d3ff10,#fffd06 42%,#ffd700 80.8%,#ffc700)"></i><i style="left:0px;top:138px;width:250px;height:3px;background:linear-gradient(90deg,#d4ff10,#fffd07 41.2%,#ffd500 82%,#ffc600)"></i><i style="left:0px;top:141px;width:250px;height:3px;background:linear-gradient(90deg,#d5ff11,#fffd08 40%,#ffd300 83.2%,#ffc600)"></i><i style="left:0px;top:144px;width:250px;height:3px;background:linear-gradient(90deg,#d6ff11,#fffd08 39.2%,#ffd100 84.8%,#ffc500)"></i><i style="left:0px;top:147px;width:250px;height:3px;background:linear-gradient(90deg,#d7ff12,#fffd09 38.4%,#ffcf00 86.4%,#ffc400)"></i><i style="left:0px;top:150px;width:250px;height:3px;background:linear-gradient(90deg,#d7ff12,#fffd0a 37.6%,#ffcd00 88%,#ffc300)"></i><i style="left:0px;top:153px;width:250px;height:3px;background:linear-gradient(90deg,#d8ff12,#fffd0a 36.8%,#fc0 87.6%,#ffc300)"></i><i style="left:0px;top:156px;width:250px;height:3px;background:linear-gradient(90deg,#d9ff13,#fffd0b 36%,#fc0 86.8%,#ffc200)"></i><i style="left:0px;top:159px;width:250px;height:3px;background:linear-gradient(90deg,#daff13,#fffd0c 34.8%,#ffcd00 85.2%,#ffc100)"></i><i style="left:0px;top:162px;width:250px;height:3px;background:linear-gradient(90deg,#dbff14,#fffd0c 34%,#ffcd00 84.4%,#ffc000)"></i><i style="left:0px;top:165px;width:250px;height:3px;background:linear-gradient(90deg,#dcff14,#fffd0d 33.2%,#ffcc01 83.6%,#ffc000)"></i><i style="left:0px;top:168px;width:250px;height:3px;background:linear-gradient(90deg,#ddff15,#fffd0d 32.4%,#ffcc01 82.8%,#ffbf00)"></i><i style="left:0px;top:171px;width:250px;height:3px;background:linear-gradient(90deg,#deff15,#fffd0e 31.6%,#ffcc02 82%,#ffbe00)"></i><i style="left:0px;top:174px;width:250px;height:3px;background:linear-gradient(90deg,#deff16,#fffd0f 30.8%,#ffcc02 80.8%,#ffbe00)"></i><i style="left:0px;top:177px;width:250px;height:3px;background:linear-gradient(90deg,#dfff16,#fffd10 29.6%,#ffcd03 79.6%,#ffbd00)"></i><i style="left:0px;top:180px;width:250px;height:3px;background:linear-gradient(90deg,#e0ff17,#fffd10 28.8%,#ffcd03 78.8%,#ffbc00)"></i><i style="left:0px;top:183px;width:250px;height:3px;background:linear-gradient(90deg,#e1ff17,#fffd11 28%,#ffcc04 78%,#fb0)"></i><i style="left:0px;top:186px;width:250px;height:3px;background:linear-gradient(90deg,#e2ff18,#fffd12 27.2%,#ffcd05 76.8%,#fb0)"></i><i style="left:0px;top:189px;width:250px;height:3px;background:linear-gradient(90deg,#e3ff18,#fffd12 26.4%,#ffcc05 76%,#ffba00)"></i><i style="left:0px;top:192px;width:250px;height:3px;background:linear-gradient(90deg,#e4ff19,#fffd13 25.6%,#ffcc06 75.2%,#ffb901)"></i><i style="left:0px;top:195px;width:250px;height:3px;background:linear-gradient(90deg,#e5ff19,#fffd14 24.8%,#ffcc06 74.4%,#ffb801)"></i><i style="left:0px;top:198px;width:250px;height:3px;background:linear-gradient(90deg,#e6ff1a,#fffd14 23.6%,#ffcd07 72.8%,#ffb801)"></i><i style="left:0px;top:201px;width:250px;height:3px;background:linear-gradient(90deg,#e7ff1a,#fffd15 22.8%,#ffcd08 72%,#ffb702)"></i><i style="left:0px;top:204px;width:250px;height:3px;background:linear-gradient(90deg,#e8ff1b,#fffd16 22%,#ffcd08 71.2%,#ffb602)"></i><i style="left:0px;top:207px;width:250px;height:3px;background:linear-gradient(90deg,#e8ff1b,#fffd16 21.2%,#ffcc09 70.4%,#ffb602)"></i><svg style="position:absolute;left:0;top:0" width="249.8" height="210" viewBox="0 0 249.8 210"><path d="M0 0L249.8 0L249.8 188.88L0 22.25Z" fill="#000" fill-opacity=".4"/><rect x="115.7" y="96.7" width="15.4" height="15.4" fill="none" stroke="#fff" stroke-width="1.6"/><circle cx="137" cy="98.5" r="4.6" fill="#ff0" stroke="#000" stroke-width="1.2"/></svg></div><div style="left:1641.7px;top:123.7px;width:250.8px;height:211px;box-shadow:inset 0 0 0 1.4px #a2a2a2"></div><div style="left:1608px;top:640.3px;width:287px;height:31.3px;background:#343434"></div><span class="t" style="left:1607.34px;top:645.9px;font-size:23.98px;color:#f4f4f4;transform:scaleX(0.944);">RGB Triplet: 255, 255, 0</span>
<!-- table -->
<div style="left:374.2px;top:734.1px;width:1536px;height:257.9px;background:#080808"></div><div style="left:375.9px;top:735.3px;width:1533px;height:256.7px;overflow:hidden;background:#3e3e3e"><div style="left:0px;top:0px;width:1533px;height:31.7px;background:linear-gradient(#303030 0%,#2d2d2d 49%,#151515 50.5%,#111 100%)"></div><div style="left:0px;top:31.7px;width:1533px;height:29.72px;background:linear-gradient(#464646 0,#414141 5px,#3e3e3e 100%)"></div><span class="t" style="left:16.98px;top:38.25px;font-size:18.6px;color:#fff;font-weight:700;transform:scaleX(1.120);-webkit-text-stroke:.45px;">x: CIE31</span><div style="left:0px;top:61.12px;width:1533px;height:29.72px;background:linear-gradient(#868686 0,#828282 5px,#7e7e7e 100%)"></div><span class="t" style="left:16.95px;top:67.67px;font-size:18.6px;color:#f4f4f4;font-weight:700;transform:scaleX(1.120);-webkit-text-stroke:.45px;">y: CIE31</span><div style="left:0px;top:90.54px;width:1533px;height:29.72px;background:linear-gradient(#464646 0,#414141 5px,#3e3e3e 100%)"></div><span class="t" style="left:16.74px;top:97.09px;font-size:18.6px;color:#fff;font-weight:700;transform:scaleX(1.123);-webkit-text-stroke:.45px;">Y</span><div style="left:0px;top:119.96px;width:1533px;height:29.72px;background:linear-gradient(#868686 0,#828282 5px,#7e7e7e 100%)"></div><span class="t" style="left:16.86px;top:126.51px;font-size:18.6px;color:#f4f4f4;font-weight:700;transform:scaleX(1.153);-webkit-text-stroke:.45px;">Target x:CIE31</span><div style="left:0px;top:149.38px;width:1533px;height:29.72px;background:linear-gradient(#464646 0,#414141 5px,#3e3e3e 100%)"></div><span class="t" style="left:16.86px;top:155.93px;font-size:18.6px;color:#fff;font-weight:700;transform:scaleX(1.153);-webkit-text-stroke:.45px;">Target y:CIE31</span><div style="left:0px;top:178.8px;width:1533px;height:29.72px;background:linear-gradient(#868686 0,#828282 5px,#7e7e7e 100%)"></div><span class="t" style="left:16.86px;top:185.35px;font-size:18.6px;color:#f4f4f4;font-weight:700;transform:scaleX(1.187);-webkit-text-stroke:.45px;">Target Y</span><div style="left:0px;top:208.22px;width:1533px;height:29.72px;background:linear-gradient(#464646 0,#414141 5px,#3e3e3e 100%)"></div><span class="t" style="left:16.21px;top:214.77px;font-size:18.6px;color:#fff;font-weight:700;transform:scaleX(1.200);-webkit-text-stroke:.45px;">ΔE 2000</span><span class="t" style="left:207.01px;top:8.7px;font-size:17.01px;color:#fff;transform:scaleX(1.260);">White</span><span class="t" style="left:188.76px;top:37.98px;font-size:19.04px;color:#fff;transform:scaleX(1.129);">0,3151</span><span class="t" style="left:188.76px;top:67.4px;font-size:19.04px;color:#ececec;transform:scaleX(1.129);">0,3396</span><span class="t" style="left:189.13px;top:96.82px;font-size:19.04px;color:#fff;transform:scaleX(1.129);">443,1640</span><span class="t" style="left:188.76px;top:126.24px;font-size:19.04px;color:#ececec;transform:scaleX(1.129);">0,3127</span><span class="t" style="left:188.76px;top:155.66px;font-size:19.04px;color:#fff;transform:scaleX(1.129);">0,3290</span><span class="t" style="left:189.13px;top:185.08px;font-size:19.04px;color:#ececec;transform:scaleX(1.129);">443,1640</span><span class="t" style="left:188.53px;top:214.5px;font-size:19.04px;color:#fff;transform:scaleX(1.129);">6,4129</span><span class="t" style="left:298.81px;top:8.7px;font-size:17.01px;color:#fff;transform:scaleX(1.170);">Gray 80</span><span class="t" style="left:289.01px;top:37.98px;font-size:19.04px;color:#fff;transform:scaleX(1.129);">0,3154</span><span class="t" style="left:289.01px;top:67.4px;font-size:19.04px;color:#ececec;transform:scaleX(1.129);">0,3410</span><span class="t" style="left:289.03px;top:96.82px;font-size:19.04px;color:#fff;transform:scaleX(1.129);">377,2983</span><span class="t" style="left:289.01px;top:126.24px;font-size:19.04px;color:#ececec;transform:scaleX(1.129);">0,3127</span><span class="t" style="left:289.01px;top:155.66px;font-size:19.04px;color:#fff;transform:scaleX(1.129);">0,3290</span><span class="t" style="left:289.03px;top:185.08px;font-size:19.04px;color:#ececec;transform:scaleX(1.129);">350,6748</span><span class="t" style="left:288.75px;top:214.5px;font-size:19.04px;color:#fff;transform:scaleX(1.129);">7,0071</span><span class="t" style="left:399.01px;top:8.7px;font-size:17.01px;color:#fff;transform:scaleX(1.164);">Gray 65</span><span class="t" style="left:389.51px;top:37.98px;font-size:19.04px;color:#fff;transform:scaleX(1.129);">0,3152</span><span class="t" style="left:389.51px;top:67.4px;font-size:19.04px;color:#ececec;transform:scaleX(1.129);">0,3413</span><span class="t" style="left:389.53px;top:96.82px;font-size:19.04px;color:#fff;transform:scaleX(1.129);">307,6150</span><span class="t" style="left:389.51px;top:126.24px;font-size:19.04px;color:#ececec;transform:scaleX(1.129);">0,3127</span><span class="t" style="left:389.51px;top:155.66px;font-size:19.04px;color:#fff;transform:scaleX(1.129);">0,3290</span><span class="t" style="left:389.28px;top:185.08px;font-size:19.04px;color:#ececec;transform:scaleX(1.129);">282,5600</span><span class="t" style="left:389.28px;top:214.5px;font-size:19.04px;color:#fff;transform:scaleX(1.129);">6,8987</span><span class="t" style="left:499.87px;top:8.7px;font-size:17.01px;color:#fff;transform:scaleX(1.157);">Gray 50</span><span class="t" style="left:490.01px;top:37.98px;font-size:19.04px;color:#fff;transform:scaleX(1.129);">0,3152</span><span class="t" style="left:490.01px;top:67.4px;font-size:19.04px;color:#ececec;transform:scaleX(1.129);">0,3414</span><span class="t" style="left:489.78px;top:96.82px;font-size:19.04px;color:#fff;transform:scaleX(1.129);">235,9992</span><span class="t" style="left:490.01px;top:126.24px;font-size:19.04px;color:#ececec;transform:scaleX(1.129);">0,3127</span><span class="t" style="left:490.01px;top:155.66px;font-size:19.04px;color:#fff;transform:scaleX(1.129);">0,3290</span><span class="t" style="left:489.78px;top:185.08px;font-size:19.04px;color:#ececec;transform:scaleX(1.129);">217,6028</span><span class="t" style="left:489.78px;top:214.5px;font-size:19.04px;color:#fff;transform:scaleX(1.129);">6,4764</span><span class="t" style="left:600.12px;top:8.7px;font-size:17.01px;color:#fff;transform:scaleX(1.154);">Gray 35</span><span class="t" style="left:590.26px;top:37.98px;font-size:19.04px;color:#fff;transform:scaleX(1.129);">0,3156</span><span class="t" style="left:590.26px;top:67.4px;font-size:19.04px;color:#ececec;transform:scaleX(1.129);">0,3423</span><span class="t" style="left:589.47px;top:96.82px;font-size:19.04px;color:#fff;transform:scaleX(1.129);">165,4026</span><span class="t" style="left:590.26px;top:126.24px;font-size:19.04px;color:#ececec;transform:scaleX(1.129);">0,3127</span><span class="t" style="left:590.26px;top:155.66px;font-size:19.04px;color:#fff;transform:scaleX(1.129);">0,3290</span><span class="t" style="left:589.47px;top:185.08px;font-size:19.04px;color:#ececec;transform:scaleX(1.129);">151,5242</span><span class="t" style="left:590.03px;top:214.5px;font-size:19.04px;color:#fff;transform:scaleX(1.129);">6,2199</span><span class="t" style="left:699.26px;top:8.7px;font-size:17.01px;color:#fff;transform:scaleX(1.138);">Black</span><span class="t" style="left:690.76px;top:37.98px;font-size:19.04px;color:#fff;transform:scaleX(1.129);">0,2505</span><span class="t" style="left:690.76px;top:67.4px;font-size:19.04px;color:#ececec;transform:scaleX(1.129);">0,2583</span><span class="t" style="left:690.76px;top:96.82px;font-size:19.04px;color:#fff;transform:scaleX(1.129);">0,1949</span><span class="t" style="left:690.76px;top:126.24px;font-size:19.04px;color:#ececec;transform:scaleX(1.129);">0,3127</span><span class="t" style="left:690.76px;top:155.66px;font-size:19.04px;color:#fff;transform:scaleX(1.129);">0,3290</span><span class="t" style="left:690.76px;top:185.08px;font-size:19.04px;color:#ececec;transform:scaleX(1.129);">0,0000</span><span class="t" style="left:690.76px;top:214.5px;font-size:19.04px;color:#fff;transform:scaleX(1.129);">0,5568</span><span class="t" style="left:766.73px;top:8.7px;font-size:17.01px;color:#fff;transform:scaleX(1.158);">Dark Skin</span><span class="t" style="left:767.01px;top:37.98px;font-size:19.04px;color:#fff;transform:scaleX(1.129);">0,4075</span><span class="t" style="left:767.01px;top:67.4px;font-size:19.04px;color:#ececec;transform:scaleX(1.129);">0,3753</span><span class="t" style="left:767.38px;top:96.82px;font-size:19.04px;color:#fff;transform:scaleX(1.129);">45,4791</span><span class="t" style="left:767.01px;top:126.24px;font-size:19.04px;color:#ececec;transform:scaleX(1.129);">0,4003</span><span class="t" style="left:767.01px;top:155.66px;font-size:19.04px;color:#fff;transform:scaleX(1.129);">0,3642</span><span class="t" style="left:767.38px;top:185.08px;font-size:19.04px;color:#ececec;transform:scaleX(1.129);">44,6412</span><span class="t" style="left:766.78px;top:214.5px;font-size:19.04px;color:#fff;transform:scaleX(1.129);">2,4622</span><span class="t" style="left:863.72px;top:8.7px;font-size:17.01px;color:#fff;transform:scaleX(1.171);">Light Skin</span><span class="t" style="left:863.26px;top:37.98px;font-size:19.04px;color:#fff;transform:scaleX(1.129);">0,3860</span><span class="t" style="left:863.26px;top:67.4px;font-size:19.04px;color:#ececec;transform:scaleX(1.129);">0,3706</span><span class="t" style="left:862.47px;top:96.82px;font-size:19.04px;color:#fff;transform:scaleX(1.129);">167,1881</span><span class="t" style="left:863.26px;top:126.24px;font-size:19.04px;color:#ececec;transform:scaleX(1.129);">0,3795</span><span class="t" style="left:863.26px;top:155.66px;font-size:19.04px;color:#fff;transform:scaleX(1.129);">0,3562</span><span class="t" style="left:862.47px;top:185.08px;font-size:19.04px;color:#ececec;transform:scaleX(1.129);">154,6428</span><span class="t" style="left:863.24px;top:214.5px;font-size:19.04px;color:#fff;transform:scaleX(1.129);">5,0709</span><span class="t" style="left:963.77px;top:8.7px;font-size:17.01px;color:#fff;transform:scaleX(1.131);">Blue Sky</span><span class="t" style="left:963.26px;top:37.98px;font-size:19.04px;color:#fff;transform:scaleX(1.129);">0,2469</span><span class="t" style="left:963.26px;top:67.4px;font-size:19.04px;color:#ececec;transform:scaleX(1.129);">0,2751</span><span class="t" style="left:963.18px;top:96.82px;font-size:19.04px;color:#fff;transform:scaleX(1.129);">86,8815</span><span class="t" style="left:963.26px;top:126.24px;font-size:19.04px;color:#ececec;transform:scaleX(1.129);">0,2496</span><span class="t" style="left:963.26px;top:155.66px;font-size:19.04px;color:#fff;transform:scaleX(1.129);">0,2656</span><span class="t" style="left:963.18px;top:185.08px;font-size:19.04px;color:#ececec;transform:scaleX(1.129);">82,8645</span><span class="t" style="left:963.63px;top:214.5px;font-size:19.04px;color:#fff;transform:scaleX(1.129);">4,3821</span><span class="t" style="left:1057.48px;top:8.7px;font-size:17.01px;color:#fff;transform:scaleX(1.165);">Foliage</span><span class="t" style="left:1051.51px;top:37.98px;font-size:19.04px;color:#fff;transform:scaleX(1.129);">0,3423</span><span class="t" style="left:1051.51px;top:67.4px;font-size:19.04px;color:#ececec;transform:scaleX(1.129);">0,4397</span><span class="t" style="left:1051.49px;top:96.82px;font-size:19.04px;color:#fff;transform:scaleX(1.129);">59,2248</span><span class="t" style="left:1051.51px;top:126.24px;font-size:19.04px;color:#ececec;transform:scaleX(1.129);">0,3395</span><span class="t" style="left:1051.51px;top:155.66px;font-size:19.04px;color:#fff;transform:scaleX(1.129);">0,4271</span><span class="t" style="left:1051.49px;top:185.08px;font-size:19.04px;color:#ececec;transform:scaleX(1.129);">57,7551</span><span class="t" style="left:1050.72px;top:214.5px;font-size:19.04px;color:#fff;transform:scaleX(1.129);">1,5746</span><span class="t" style="left:1139.18px;top:8.7px;font-size:17.01px;color:#fff;transform:scaleX(1.200);">Blue Flower</span><span class="t" style="left:1139.51px;top:37.98px;font-size:19.04px;color:#fff;transform:scaleX(1.129);">0,2664</span><span class="t" style="left:1139.51px;top:67.4px;font-size:19.04px;color:#ececec;transform:scaleX(1.129);">0,2617</span><span class="t" style="left:1138.72px;top:96.82px;font-size:19.04px;color:#fff;transform:scaleX(1.129);">109,0599</span><span class="t" style="left:1139.51px;top:126.24px;font-size:19.04px;color:#ececec;transform:scaleX(1.129);">0,2681</span><span class="t" style="left:1139.51px;top:155.66px;font-size:19.04px;color:#fff;transform:scaleX(1.129);">0,2525</span><span class="t" style="left:1138.72px;top:185.08px;font-size:19.04px;color:#ececec;transform:scaleX(1.129);">103,3391</span><span class="t" style="left:1139.53px;top:214.5px;font-size:19.04px;color:#fff;transform:scaleX(1.129);">3,1167</span><span class="t" style="left:1257.44px;top:8.7px;font-size:17.01px;color:#fff;transform:scaleX(1.187);">Bluish Green</span><span class="t" style="left:1257.76px;top:37.98px;font-size:19.04px;color:#fff;transform:scaleX(1.129);">0,2616</span><span class="t" style="left:1257.76px;top:67.4px;font-size:19.04px;color:#ececec;transform:scaleX(1.129);">0,3736</span><span class="t" style="left:1256.97px;top:96.82px;font-size:19.04px;color:#fff;transform:scaleX(1.129);">199,7625</span><span class="t" style="left:1257.76px;top:126.24px;font-size:19.04px;color:#ececec;transform:scaleX(1.129);">0,2626</span><span class="t" style="left:1257.76px;top:155.66px;font-size:19.04px;color:#fff;transform:scaleX(1.129);">0,3616</span><span class="t" style="left:1256.97px;top:185.08px;font-size:19.04px;color:#ececec;transform:scaleX(1.129);">185,5661</span><span class="t" style="left:1257.78px;top:214.5px;font-size:19.04px;color:#fff;transform:scaleX(1.129);">3,1400</span><span class="t" style="left:1395.86px;top:8.7px;font-size:17.01px;color:#fff;transform:scaleX(1.171);">Orange</span><span class="t" style="left:1384.01px;top:37.98px;font-size:19.04px;color:#fff;transform:scaleX(1.129);">0,5214</span><span class="t" style="left:1384.01px;top:67.4px;font-size:19.04px;color:#ececec;transform:scaleX(1.129);">0,4116</span><span class="t" style="left:1383.22px;top:96.82px;font-size:19.04px;color:#fff;transform:scaleX(1.129);">133,4611</span><span class="t" style="left:1384.01px;top:126.24px;font-size:19.04px;color:#ececec;transform:scaleX(1.129);">0,5122</span><span class="t" style="left:1384.01px;top:155.66px;font-size:19.04px;color:#fff;transform:scaleX(1.129);">0,4063</span><span class="t" style="left:1383.22px;top:185.08px;font-size:19.04px;color:#ececec;transform:scaleX(1.129);">125,6273</span><span class="t" style="left:1383.78px;top:214.5px;font-size:19.04px;color:#fff;transform:scaleX(1.129);">2,3383</span><span class="t" style="left:1484.07px;top:8.7px;font-size:17.01px;color:#fff;transform:scaleX(1.237);">Purplish Blue</span><span class="t" style="left:1484.46px;top:37.98px;font-size:19.04px;color:#fff;transform:scaleX(1.129);">0,2116</span><span class="t" style="left:1484.46px;top:67.4px;font-size:19.04px;color:#ececec;transform:scaleX(1.129);">0,1995</span><span class="t" style="left:1484.44px;top:96.82px;font-size:19.04px;color:#fff;transform:scaleX(1.129);">54,4612</span><span class="t" style="left:1484.46px;top:126.24px;font-size:19.04px;color:#ececec;transform:scaleX(1.129);">0,2161</span><span class="t" style="left:1484.46px;top:155.66px;font-size:19.04px;color:#fff;transform:scaleX(1.129);">0,1927</span><span class="t" style="left:1484.44px;top:185.08px;font-size:19.04px;color:#ececec;transform:scaleX(1.129);">52,0812</span><span class="t" style="left:1484.48px;top:214.5px;font-size:19.04px;color:#fff;transform:scaleX(1.129);">3,2201</span><div style="left:0px;top:237.7px;width:1533px;height:19.2px;background:#5e5e5e"></div><div style="left:25.1px;top:239.5px;width:670.5px;height:15px;background:#404040;border-radius:8px"></div><div style="left:2.1px;top:239.7px;width:18.2px;height:14.6px;background:#7e7e7e;border-radius:3px"></div><svg style="position:absolute;left:2.6px;top:239.2px" width="17" height="16" viewBox="0 0 17 16"><path d="M11.5 3.5v9l-6.5-4.5z" fill="#333"/></svg><div style="left:1512.6px;top:239.2px;width:17px;height:15.5px;background:#7a7a7a;border-radius:3px"></div><svg style="position:absolute;left:1512.6px;top:239.2px" width="17" height="16" viewBox="0 0 17 16"><path d="M5.5 3.5v9l6.5-4.5z" fill="#333"/></svg></div>
<!-- bottom -->
<div style="left:1.3px;top:997.5px;width:53.8px;height:45.2px;background:linear-gradient(#8c8c8c,#787878 40%,#5c5c5c);border-radius:4px;box-shadow:inset 0 0 0 1px rgba(160,160,160,.5)"></div><div style="left:4.9px;top:1001.5px;width:46.6px;height:26.4px;background:#ffffff;border-radius:3px;box-shadow:0 0 1.5px rgba(0,0,0,.6)"></div><span class="t" style="left:17.84px;top:1033.89px;font-size:8.28px;color:#262626;font-weight:700;transform:scaleX(0.930);">White</span><div style="left:57.17px;top:997.5px;width:53.8px;height:45.2px;background:linear-gradient(#8c8c8c,#787878 40%,#5c5c5c);border-radius:4px;box-shadow:inset 0 0 0 1px rgba(160,160,160,.5)"></div><div style="left:60.77px;top:1001.5px;width:46.6px;height:26.4px;background:#e6e6e6;border-radius:3px;box-shadow:0 0 1.5px rgba(0,0,0,.6)"></div><span class="t" style="left:69.93px;top:1033.89px;font-size:8.28px;color:#262626;font-weight:700;transform:scaleX(0.930);">Gray 80</span><div style="left:113.04px;top:997.5px;width:53.8px;height:45.2px;background:linear-gradient(#8c8c8c,#787878 40%,#5c5c5c);border-radius:4px;box-shadow:inset 0 0 0 1px rgba(160,160,160,.5)"></div><div style="left:116.64px;top:1001.5px;width:46.6px;height:26.4px;background:#d1d1d1;border-radius:3px;box-shadow:0 0 1.5px rgba(0,0,0,.6)"></div><span class="t" style="left:125.75px;top:1033.89px;font-size:8.28px;color:#262626;font-weight:700;transform:scaleX(0.930);">Gray 65</span><div style="left:168.91px;top:997.5px;width:53.8px;height:45.2px;background:linear-gradient(#8c8c8c,#787878 40%,#5c5c5c);border-radius:4px;box-shadow:inset 0 0 0 1px rgba(160,160,160,.5)"></div><div style="left:172.51px;top:1001.5px;width:46.6px;height:26.4px;background:#b9b9b9;border-radius:3px;box-shadow:0 0 1.5px rgba(0,0,0,.6)"></div><span class="t" style="left:181.67px;top:1033.89px;font-size:8.28px;color:#262626;font-weight:700;transform:scaleX(0.930);">Gray 50</span><div style="left:224.78px;top:997.5px;width:53.8px;height:45.2px;background:linear-gradient(#8c8c8c,#787878 40%,#5c5c5c);border-radius:4px;box-shadow:inset 0 0 0 1px rgba(160,160,160,.5)"></div><div style="left:228.38px;top:1001.5px;width:46.6px;height:26.4px;background:#9e9e9e;border-radius:3px;box-shadow:0 0 1.5px rgba(0,0,0,.6)"></div><span class="t" style="left:237.49px;top:1033.89px;font-size:8.28px;color:#262626;font-weight:700;transform:scaleX(0.930);">Gray 35</span><div style="left:280.65px;top:997.5px;width:53.8px;height:45.2px;background:linear-gradient(#8c8c8c,#787878 40%,#5c5c5c);border-radius:4px;box-shadow:inset 0 0 0 1px rgba(160,160,160,.5)"></div><div style="left:284.25px;top:1001.5px;width:46.6px;height:26.4px;background:#000000;border-radius:3px;box-shadow:0 0 1.5px rgba(0,0,0,.6)"></div><span class="t" style="left:297.01px;top:1033.89px;font-size:8.28px;color:#262626;font-weight:700;transform:scaleX(0.930);">Black</span><div style="left:336.52px;top:997.5px;width:53.8px;height:45.2px;background:linear-gradient(#8c8c8c,#787878 40%,#5c5c5c);border-radius:4px;box-shadow:inset 0 0 0 1px rgba(160,160,160,.5)"></div><div style="left:340.12px;top:1001.5px;width:46.6px;height:26.4px;background:#735244;border-radius:3px;box-shadow:0 0 1.5px rgba(0,0,0,.6)"></div><span class="t" style="left:345.63px;top:1033.89px;font-size:8.28px;color:#262626;font-weight:700;transform:scaleX(0.930);">Dark Skin</span><div style="left:392.39px;top:997.5px;width:53.8px;height:45.2px;background:linear-gradient(#8c8c8c,#787878 40%,#5c5c5c);border-radius:4px;box-shadow:inset 0 0 0 1px rgba(160,160,160,.5)"></div><div style="left:395.99px;top:1001.5px;width:46.6px;height:26.4px;background:#c29682;border-radius:3px;box-shadow:0 0 1.5px rgba(0,0,0,.6)"></div><span class="t" style="left:400.66px;top:1033.89px;font-size:8.28px;color:#262626;font-weight:700;transform:scaleX(0.930);">Light Skin</span><div style="left:448.26px;top:997.5px;width:53.8px;height:45.2px;background:linear-gradient(#8c8c8c,#787878 40%,#5c5c5c);border-radius:4px;box-shadow:inset 0 0 0 1px rgba(160,160,160,.5)"></div><div style="left:451.86px;top:1001.5px;width:46.6px;height:26.4px;background:#5b7aa0;border-radius:3px;box-shadow:0 0 1.5px rgba(0,0,0,.6)"></div><span class="t" style="left:458.65px;top:1033.89px;font-size:8.28px;color:#262626;font-weight:700;transform:scaleX(0.930);">Blue Sky</span><div style="left:504.13px;top:997.5px;width:53.8px;height:45.2px;background:linear-gradient(#8c8c8c,#787878 40%,#5c5c5c);border-radius:4px;box-shadow:inset 0 0 0 1px rgba(160,160,160,.5)"></div><div style="left:507.73px;top:1001.5px;width:46.6px;height:26.4px;background:#586c42;border-radius:3px;box-shadow:0 0 1.5px rgba(0,0,0,.6)"></div><span class="t" style="left:517.42px;top:1033.89px;font-size:8.28px;color:#262626;font-weight:700;transform:scaleX(0.930);">Foliage</span><div style="left:560px;top:997.5px;width:53.8px;height:45.2px;background:linear-gradient(#8c8c8c,#787878 40%,#5c5c5c);border-radius:4px;box-shadow:inset 0 0 0 1px rgba(160,160,160,.5)"></div><div style="left:563.6px;top:1001.5px;width:46.6px;height:26.4px;background:#8580b1;border-radius:3px;box-shadow:0 0 1.5px rgba(0,0,0,.6)"></div><span class="t" style="left:564.87px;top:1033.89px;font-size:8.28px;color:#262626;font-weight:700;transform:scaleX(0.930);">Blue Flower</span><div style="left:615.87px;top:997.5px;width:53.8px;height:45.2px;background:linear-gradient(#8c8c8c,#787878 40%,#5c5c5c);border-radius:4px;box-shadow:inset 0 0 0 1px rgba(160,160,160,.5)"></div><div style="left:619.47px;top:1001.5px;width:46.6px;height:26.4px;background:#62beaa;border-radius:3px;box-shadow:0 0 1.5px rgba(0,0,0,.6)"></div><span class="t" style="left:618.78px;top:1033.89px;font-size:8.28px;color:#262626;font-weight:700;transform:scaleX(0.930);">Bluish Green</span><div style="left:671.74px;top:997.5px;width:53.8px;height:45.2px;background:linear-gradient(#8c8c8c,#787878 40%,#5c5c5c);border-radius:4px;box-shadow:inset 0 0 0 1px rgba(160,160,160,.5)"></div><div style="left:675.34px;top:1001.5px;width:46.6px;height:26.4px;background:#da782c;border-radius:3px;box-shadow:0 0 1.5px rgba(0,0,0,.6)"></div><span class="t" style="left:685.13px;top:1033.89px;font-size:8.28px;color:#262626;font-weight:700;transform:scaleX(0.930);">Orange</span><div style="left:727.61px;top:997.5px;width:53.8px;height:45.2px;background:linear-gradient(#8c8c8c,#787878 40%,#5c5c5c);border-radius:4px;box-shadow:inset 0 0 0 1px rgba(160,160,160,.5)"></div><div style="left:731.21px;top:1001.5px;width:46.6px;height:26.4px;background:#4b5ca6;border-radius:3px;box-shadow:0 0 1.5px rgba(0,0,0,.6)"></div><span class="t" style="left:729.56px;top:1033.89px;font-size:8.28px;color:#262626;font-weight:700;transform:scaleX(0.930);">Purplish Blue</span><div style="left:783.48px;top:997.5px;width:53.8px;height:45.2px;background:linear-gradient(#8c8c8c,#787878 40%,#5c5c5c);border-radius:4px;box-shadow:inset 0 0 0 1px rgba(160,160,160,.5)"></div><div style="left:787.08px;top:1001.5px;width:46.6px;height:26.4px;background:#c1545f;border-radius:3px;box-shadow:0 0 1.5px rgba(0,0,0,.6)"></div><span class="t" style="left:784.9px;top:1033.89px;font-size:8.28px;color:#262626;font-weight:700;transform:scaleX(0.930);">Moderate Red</span><div style="left:839.35px;top:997.5px;width:53.8px;height:45.2px;background:linear-gradient(#8c8c8c,#787878 40%,#5c5c5c);border-radius:4px;box-shadow:inset 0 0 0 1px rgba(160,160,160,.5)"></div><div style="left:842.95px;top:1001.5px;width:46.6px;height:26.4px;background:#5c3c6c;border-radius:3px;box-shadow:0 0 1.5px rgba(0,0,0,.6)"></div><span class="t" style="left:854.14px;top:1033.89px;font-size:8.28px;color:#262626;font-weight:700;transform:scaleX(0.930);">Purple</span><div style="left:895.22px;top:997.5px;width:53.8px;height:45.2px;background:linear-gradient(#8c8c8c,#787878 40%,#5c5c5c);border-radius:4px;box-shadow:inset 0 0 0 1px rgba(160,160,160,.5)"></div><div style="left:898.82px;top:1001.5px;width:46.6px;height:26.4px;background:#9dbc40;border-radius:3px;box-shadow:0 0 1.5px rgba(0,0,0,.6)"></div><span class="t" style="left:898.1px;top:1033.89px;font-size:8.28px;color:#262626;font-weight:700;transform:scaleX(0.930);">Yellow Green</span><div style="left:951.09px;top:997.5px;width:53.8px;height:45.2px;background:linear-gradient(#8c8c8c,#787878 40%,#5c5c5c);border-radius:4px;box-shadow:inset 0 0 0 1px rgba(160,160,160,.5)"></div><div style="left:954.69px;top:1001.5px;width:46.6px;height:26.4px;background:#e6a02e;border-radius:3px;box-shadow:0 0 1.5px rgba(0,0,0,.6)"></div><span class="t" style="left:951.37px;top:1033.89px;font-size:8.28px;color:#262626;font-weight:700;transform:scaleX(0.929);">Orange Yellow</span><div style="left:1006.96px;top:997.5px;width:53.8px;height:45.2px;background:linear-gradient(#8c8c8c,#787878 40%,#5c5c5c);border-radius:4px;box-shadow:inset 0 0 0 1px rgba(160,160,160,.5)"></div><div style="left:1010.56px;top:1001.5px;width:46.6px;height:26.4px;background:#343c98;border-radius:3px;box-shadow:0 0 1.5px rgba(0,0,0,.6)"></div><span class="t" style="left:1025.39px;top:1033.89px;font-size:8.28px;color:#262626;font-weight:700;transform:scaleX(0.930);">Blue</span><div style="left:1062.83px;top:997.5px;width:53.8px;height:45.2px;background:linear-gradient(#8c8c8c,#787878 40%,#5c5c5c);border-radius:4px;box-shadow:inset 0 0 0 1px rgba(160,160,160,.5)"></div><div style="left:1066.43px;top:1001.5px;width:46.6px;height:26.4px;background:#469848;border-radius:3px;box-shadow:0 0 1.5px rgba(0,0,0,.6)"></div><span class="t" style="left:1078.68px;top:1033.89px;font-size:8.28px;color:#262626;font-weight:700;transform:scaleX(0.930);">Green</span><div style="left:1118.7px;top:997.5px;width:53.8px;height:45.2px;background:linear-gradient(#8c8c8c,#787878 40%,#5c5c5c);border-radius:4px;box-shadow:inset 0 0 0 1px rgba(160,160,160,.5)"></div><div style="left:1122.3px;top:1001.5px;width:46.6px;height:26.4px;background:#b02e36;border-radius:3px;box-shadow:0 0 1.5px rgba(0,0,0,.6)"></div><span class="t" style="left:1138.32px;top:1033.89px;font-size:8.28px;color:#262626;font-weight:700;transform:scaleX(0.930);">Red</span><div style="left:1174.57px;top:997.5px;width:53.8px;height:45.2px;background:linear-gradient(#8c8c8c,#787878 40%,#5c5c5c);border-radius:4px;box-shadow:inset 0 0 0 1px rgba(160,160,160,.5)"></div><div style="left:1178.17px;top:1001.5px;width:46.6px;height:26.4px;background:#eec820;border-radius:3px;box-shadow:0 0 1.5px rgba(0,0,0,.6)"></div><span class="t" style="left:1189.41px;top:1033.89px;font-size:8.28px;color:#262626;font-weight:700;transform:scaleX(0.930);">Yellow</span><div style="left:1230.44px;top:997.5px;width:53.8px;height:45.2px;background:linear-gradient(#8c8c8c,#787878 40%,#5c5c5c);border-radius:4px;box-shadow:inset 0 0 0 1px rgba(160,160,160,.5)"></div><div style="left:1234.04px;top:1001.5px;width:46.6px;height:26.4px;background:#bc5696;border-radius:3px;box-shadow:0 0 1.5px rgba(0,0,0,.6)"></div><span class="t" style="left:1241.43px;top:1033.89px;font-size:8.28px;color:#262626;font-weight:700;transform:scaleX(0.930);">Magenta</span><div style="left:1286.31px;top:997.5px;width:53.8px;height:45.2px;background:linear-gradient(#8c8c8c,#787878 40%,#5c5c5c);border-radius:4px;box-shadow:inset 0 0 0 1px rgba(160,160,160,.5)"></div><div style="left:1289.91px;top:1001.5px;width:46.6px;height:26.4px;background:#0886a6;border-radius:3px;box-shadow:0 0 1.5px rgba(0,0,0,.6)"></div><span class="t" style="left:1303.87px;top:1033.89px;font-size:8.28px;color:#262626;font-weight:700;transform:scaleX(0.930);">Cyan</span><div style="left:1342.18px;top:997.5px;width:53.8px;height:45.2px;background:linear-gradient(#8c8c8c,#787878 40%,#5c5c5c);border-radius:4px;box-shadow:inset 0 0 0 1px rgba(160,160,160,.5)"></div><div style="left:1345.78px;top:1001.5px;width:46.6px;height:26.4px;background:#ff0000;border-radius:3px;box-shadow:0 0 1.5px rgba(0,0,0,.6)"></div><span class="t" style="left:1350.89px;top:1033.89px;font-size:8.28px;color:#262626;font-weight:700;transform:scaleX(0.930);">100% Red</span><div style="left:1398.05px;top:997.5px;width:53.8px;height:45.2px;background:linear-gradient(#8c8c8c,#787878 40%,#5c5c5c);border-radius:4px;box-shadow:inset 0 0 0 1px rgba(160,160,160,.5)"></div><div style="left:1401.65px;top:1001.5px;width:46.6px;height:26.4px;background:#00ff00;border-radius:3px;box-shadow:0 0 1.5px rgba(0,0,0,.6)"></div><span class="t" style="left:1402.89px;top:1033.89px;font-size:8.28px;color:#262626;font-weight:700;transform:scaleX(0.930);">100% Green</span><div style="left:1453.92px;top:997.5px;width:53.8px;height:45.2px;background:linear-gradient(#8c8c8c,#787878 40%,#5c5c5c);border-radius:4px;box-shadow:inset 0 0 0 1px rgba(160,160,160,.5)"></div><div style="left:1457.52px;top:1001.5px;width:46.6px;height:26.4px;background:#0000ff;border-radius:3px;box-shadow:0 0 1.5px rgba(0,0,0,.6)"></div><span class="t" style="left:1461.44px;top:1033.89px;font-size:8.28px;color:#262626;font-weight:700;transform:scaleX(0.930);">100% Blue</span><div style="left:1509.79px;top:997.5px;width:53.8px;height:45.2px;background:linear-gradient(#8c8c8c,#787878 40%,#5c5c5c);border-radius:4px;box-shadow:inset 0 0 0 1px rgba(160,160,160,.5)"></div><div style="left:1513.39px;top:1001.5px;width:46.6px;height:26.4px;background:#00ffff;border-radius:3px;box-shadow:0 0 1.5px rgba(0,0,0,.6)"></div><span class="t" style="left:1516.35px;top:1033.89px;font-size:8.28px;color:#262626;font-weight:700;transform:scaleX(0.930);">100% Cyan</span><div style="left:1565.66px;top:997.5px;width:53.8px;height:45.2px;background:linear-gradient(#8c8c8c,#787878 40%,#5c5c5c);border-radius:4px;box-shadow:inset 0 0 0 1px rgba(160,160,160,.5)"></div><div style="left:1569.26px;top:1001.5px;width:46.6px;height:18.6px;background:#ff00ff;border-radius:3px;box-shadow:0 0 1.5px rgba(0,0,0,.6)"></div><span class="t" style="left:1576.08px;top:1024.89px;font-size:8.28px;color:#262626;font-weight:700;transform:scaleX(0.930);">100%</span><span class="t" style="left:1576.05px;top:1033.89px;font-size:8.28px;color:#262626;font-weight:700;transform:scaleX(0.930);">Magenta</span><div style="left:1621.53px;top:997.5px;width:53.8px;height:45.2px;background:linear-gradient(#1c1c1c,#2c2c2c);border-radius:4px"></div><div style="left:1625.13px;top:1001.5px;width:46.6px;height:26.4px;background:#ffff00;border-radius:3px;box-shadow:0 0 1.5px rgba(0,0,0,.6)"></div><span class="t" style="left:1625.34px;top:1033.89px;font-size:8.28px;color:#fff;font-weight:700;transform:scaleX(0.930);">100% Yellow</span><div style="left:1678.3px;top:997.5px;width:35px;height:13.5px;background:linear-gradient(#9e9e9e,#7e7e7e 45%,#666);border-radius:3px 3px 0 0;box-shadow:inset 0 0 0 1px rgba(160,160,160,.4)"></div><div style="left:1690px;top:999px;width:11.5px;height:11.5px;border-radius:50%;background:linear-gradient(#666,#8a8a8a)"></div><svg style="position:absolute;left:1690px;top:999px" width="12" height="12" viewBox="0 0 12 12"><path d="M2.8 7.2l3-3 3 3z" fill="#333"/></svg><div style="left:1678.3px;top:1012px;width:35px;height:31px;background:linear-gradient(#9e9e9e,#7e7e7e 45%,#666);border-radius:0 0 3px 3px;box-shadow:inset 0 0 0 1px rgba(160,160,160,.4)"></div><div style="left:1684.8px;top:1016.5px;width:22px;height:22px;border:1.6px solid #1c1c1c;border-radius:4px;box-sizing:border-box;background:linear-gradient(#a8a8a8,#8c8c8c 50%,#6e6e6e 50%,#7c7c7c)"></div><div style="left:1690.8px;top:1022.2px;width:10px;height:10.4px;background:#000"></div><div style="left:1714.7px;top:997.5px;width:34.1px;height:21.8px;background:linear-gradient(#9e9e9e,#7e7e7e 45%,#666);border-radius:3px 3px 0 0;box-shadow:inset 0 0 0 1px rgba(160,160,160,.35)"></div><div style="left:1724.25px;top:1001px;width:15px;height:15px;border-radius:50%;background:linear-gradient(#666,#8c8c8c)"></div><svg style="position:absolute;left:1724.25px;top:1001px" width="15" height="15" viewBox="0 0 15 15"><rect x="5" y="5" width="5.4" height="5.4" fill="#333"/></svg><div style="left:1749.6px;top:997.5px;width:32.6px;height:21.8px;background:linear-gradient(#9e9e9e,#7e7e7e 45%,#666);border-radius:3px 3px 0 0;box-shadow:inset 0 0 0 1px rgba(160,160,160,.35)"></div><div style="left:1758.4px;top:1001px;width:15px;height:15px;border-radius:50%;background:linear-gradient(#666,#8c8c8c)"></div><svg style="position:absolute;left:1758.4px;top:1001px" width="15" height="15" viewBox="0 0 15 15"><path d="M5.3 4l5.6 3.6-5.6 3.6z" fill="#333"/></svg><div style="left:1783px;top:997.5px;width:32.5px;height:21.8px;background:linear-gradient(#9e9e9e,#7e7e7e 45%,#666);border-radius:3px 3px 0 0;box-shadow:inset 0 0 0 1px rgba(160,160,160,.35)"></div><div style="left:1791.75px;top:1001px;width:15px;height:15px;border-radius:50%;background:linear-gradient(#666,#8c8c8c)"></div><svg style="position:absolute;left:1791.75px;top:1001px" width="15" height="15" viewBox="0 0 15 15"><path d="M5 4.4h-1.6v6.4h1.6M10 4.4h1.6v6.4h-1.6" fill="none" stroke="#333" stroke-width="1.1"/><path d="M5.6 7.6h4" stroke="#333" stroke-width="1.1" stroke-dasharray="1 .6"/></svg><div style="left:1816.3px;top:997.5px;width:32.9px;height:21.8px;background:linear-gradient(#9e9e9e,#7e7e7e 45%,#666);border-radius:3px 3px 0 0;box-shadow:inset 0 0 0 1px rgba(160,160,160,.35)"></div><div style="left:1825.25px;top:1001px;width:15px;height:15px;border-radius:50%;background:linear-gradient(#666,#8c8c8c)"></div><svg style="position:absolute;left:1825.25px;top:1001px" width="15" height="15" viewBox="0 0 15 15"><path d="M7.5 7.5c-1.2-2-4-1.8-4 0s2.8 2 4 0s4-1.8 4 0s-2.8 2-4 0z" fill="none" stroke="#333" stroke-width="1.1"/></svg><div style="left:1850px;top:997.5px;width:34.2px;height:21.8px;background:linear-gradient(#303030,#3a3a3a 50%,#2a2a2a);border-radius:3px 3px 0 0;"></div><div style="left:1859.6px;top:1001px;width:15px;height:15px;border-radius:50%;background:linear-gradient(#262626,#333)"></div><svg style="position:absolute;left:1859.6px;top:1001px" width="15" height="15" viewBox="0 0 15 15"><path d="M4.2 6.6a3.5 3.5 0 0 1 6.3-1.2M10.8 8.4a3.5 3.5 0 0 1-6.3 1.2" fill="none" stroke="#111" stroke-width="1.5"/></svg><div style="left:1885px;top:997.5px;width:34.2px;height:21.8px;background:linear-gradient(#303030,#3a3a3a 50%,#2a2a2a);border-radius:3px 3px 0 0;"></div><div style="left:1894.6px;top:1001px;width:15px;height:15px;border-radius:50%;background:linear-gradient(#262626,#333)"></div><div style="left:1714.7px;top:1020.3px;width:101.4px;height:22.5px;background:linear-gradient(#a4a4a4,#8a8a8a 50%,#6c6c6c);box-shadow:inset 0 0 0 1px rgba(175,175,175,.45);border-radius:3px 0 0 3px"></div><div style="left:1816.7px;top:1020.3px;width:101.5px;height:22.5px;background:linear-gradient(#a4a4a4,#8a8a8a 50%,#6c6c6c);box-shadow:inset 0 0 0 1px rgba(175,175,175,.45);border-radius:0 3px 3px 0"></div><div style="left:1730.5px;top:1024.5px;width:14.5px;height:14.5px;border-radius:50%;background:linear-gradient(#6c6c6c,#8a8a8a)"></div><span class="t" style="left:1733.99px;top:1025.6px;font-size:13px;color:#3a3a3a;">«</span><span class="t" style="left:1756.94px;top:1024.53px;font-size:16.86px;color:#2a2a2a;font-weight:700;transform:scaleX(0.956);">Back</span><span class="t" style="left:1836.78px;top:1024.53px;font-size:16.86px;color:#2a2a2a;font-weight:700;transform:scaleX(1.093);">Next</span><div style="left:1890.5px;top:1024.5px;width:14.5px;height:14.5px;border-radius:50%;background:linear-gradient(#6c6c6c,#8a8a8a)"></div><span class="t" style="left:1894.19px;top:1025.6px;font-size:13px;color:#3a3a3a;">»</span>
</body></html>
